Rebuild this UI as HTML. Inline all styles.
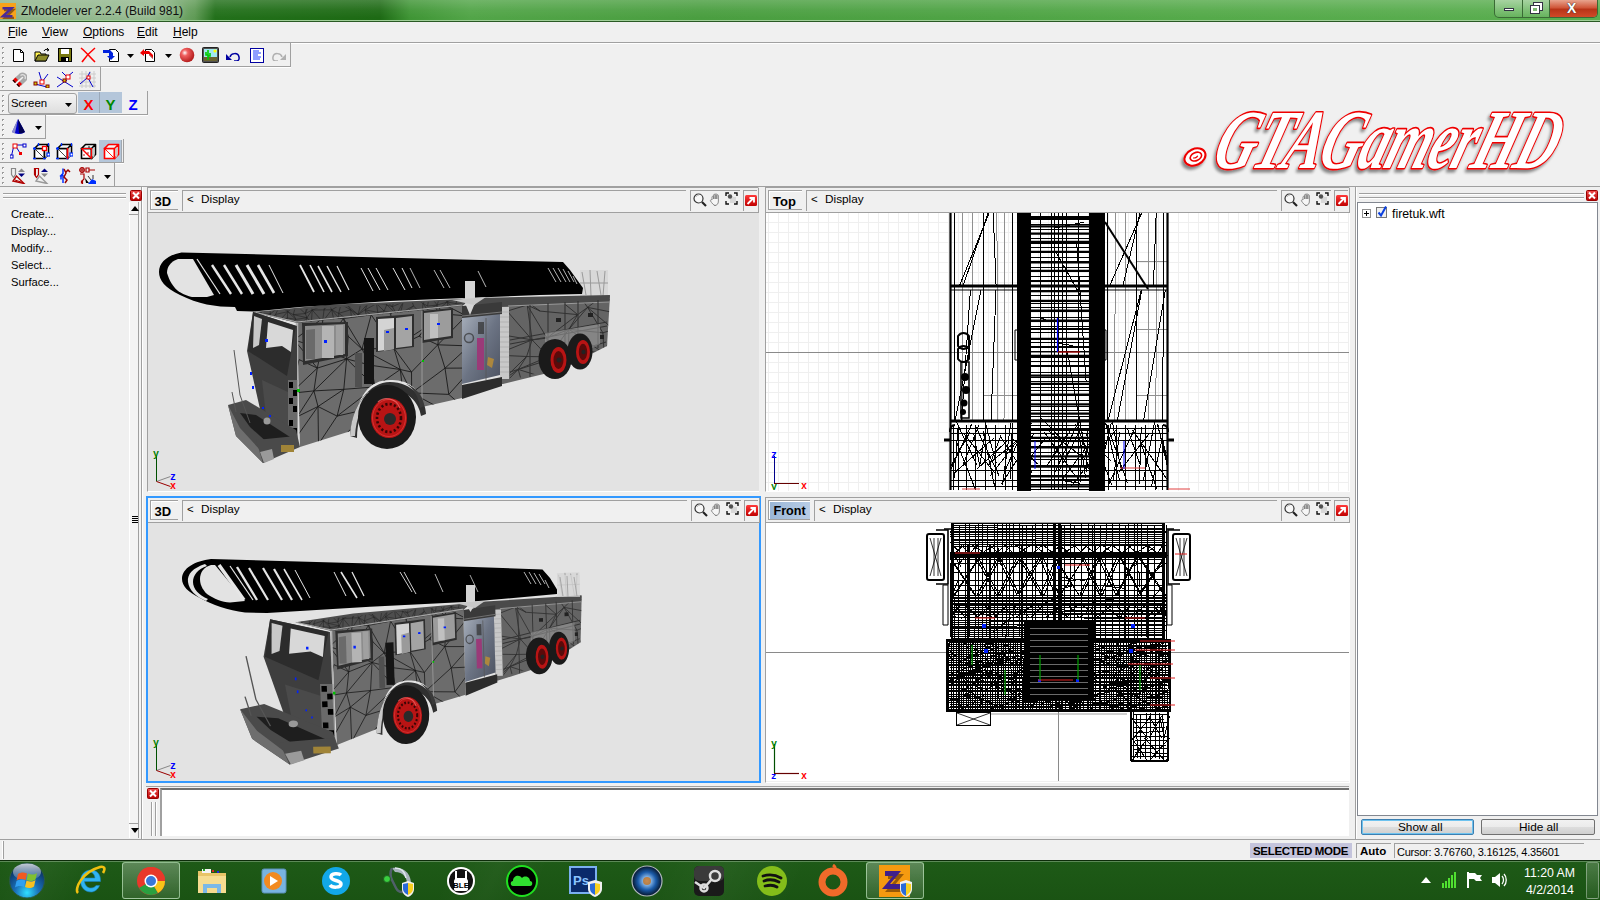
<!DOCTYPE html><html><head><meta charset="utf-8"><style>
*{margin:0;padding:0;box-sizing:border-box}
html,body{width:1600px;height:900px;overflow:hidden;background:#f0f0f0;font-family:"Liberation Sans",sans-serif;color:#000}
body>div,body>svg{position:absolute}
.t{white-space:nowrap;position:absolute}
</style></head><body><div style="left:0;top:0;width:1600px;height:22px;background:linear-gradient(90deg,#8fb58a 0px,#93b98e 150px,#5f9a55 195px,#22701a 215px,#1d6a14 380px,#3f9535 410px,#52a548 470px,#4a9e40 700px,#4fa445 1000px,#55aa4a 1200px,#5aae50 1600px)"></div>
<div style="left:0;top:0;width:1600px;height:22px;background:linear-gradient(180deg,rgba(255,255,255,0.18) 0px,rgba(255,255,255,0.05) 10px,rgba(0,0,0,0.0) 18px)"></div>
<div style="left:0px;top:20px;width:1600px;height:1px;background:#9fcf98"></div>
<div style="left:0px;top:21px;width:1600px;height:1px;background:#2a5a25"></div>
<svg style="left:0;top:3px" width="16" height="16" viewBox="0 0 16 16"><rect width="16" height="16" fill="#f7a21a"/><path d="M4 7H13L5 15H14" fill="none" stroke="#6a3a10" stroke-width="2.6" opacity=".7"/><path d="M2.5 5.2H11.5L3 13.2H12.5" fill="none" stroke="#4a2a98" stroke-width="2.6"/></svg>
<div class="t" style="left:21px;top:4.84px;font-size:12px;line-height:12px;color:#101010;text-shadow:0 0 6px rgba(255,255,255,.5)">ZModeler ver 2.2.4 (Build 981)</div>
<div style="left:1494px;top:0;width:104px;height:18px;border:1px solid #3a6a35;border-top:none;border-radius:0 0 5px 5px;overflow:hidden;background:linear-gradient(180deg,rgba(255,255,255,.35),rgba(255,255,255,.08))">
<div style="position:absolute;left:0;top:0;width:28px;height:17px;border-right:1px solid #3a6a35"></div>
<div style="position:absolute;left:28px;top:0;width:27px;height:17px;border-right:1px solid #3a6a35"></div>
<div style="position:absolute;left:55px;top:0;width:48px;height:17px;background:linear-gradient(180deg,#e8a48e 0%,#d0573a 45%,#b83418 55%,#d04a28 100%)"></div>
<div style="position:absolute;left:9px;top:8px;width:10px;height:3px;background:#fff;border:1px solid #334"></div>
<div style="position:absolute;left:39px;top:3px;width:8px;height:7px;border:2px solid #fff;box-shadow:0 0 0 1px #334"></div><div style="position:absolute;left:36px;top:6px;width:8px;height:7px;border:2px solid #fff;box-shadow:0 0 0 1px #334;background:#7dba74"></div>
<div style="position:absolute;left:72px;top:0px;font:bold 14px/16px 'Liberation Sans';color:#fff;text-shadow:0 0 1px #333,0 0 1px #333">X</div>
</div>
<div class="t" style="left:8px;top:25.84px;font-size:12px;line-height:12px;"><u>F</u>ile</div>
<div class="t" style="left:42px;top:25.84px;font-size:12px;line-height:12px;"><u>V</u>iew</div>
<div class="t" style="left:83px;top:25.84px;font-size:12px;line-height:12px;"><u>O</u>ptions</div>
<div class="t" style="left:137px;top:25.84px;font-size:12px;line-height:12px;"><u>E</u>dit</div>
<div class="t" style="left:173px;top:25.84px;font-size:12px;line-height:12px;"><u>H</u>elp</div>
<div style="left:0px;top:42px;width:1600px;height:1px;background:#a0a0a0"></div>
<div style="left:0px;top:43px;width:1600px;height:1px;background:#ffffff"></div>
<div style="left:0px;top:43px;width:290px;height:23px;background:#f0f0f0"></div>
<div style="left:0px;top:66px;width:291px;height:1px;background:#a0a0a0"></div>
<div style="left:290px;top:43px;width:1px;height:23px;background:#a0a0a0"></div>
<div style="left:0px;top:67px;width:291px;height:1px;background:#fff"></div>
<div style="left:2px;top:47px;width:2px;height:2px;background:#9a9a9a"></div>
<div style="left:3px;top:48px;width:1px;height:1px;background:#fff"></div>
<div style="left:2px;top:52px;width:2px;height:2px;background:#9a9a9a"></div>
<div style="left:3px;top:53px;width:1px;height:1px;background:#fff"></div>
<div style="left:2px;top:57px;width:2px;height:2px;background:#9a9a9a"></div>
<div style="left:3px;top:58px;width:1px;height:1px;background:#fff"></div>
<div style="left:2px;top:62px;width:2px;height:2px;background:#9a9a9a"></div>
<div style="left:3px;top:63px;width:1px;height:1px;background:#fff"></div>
<div style="left:0px;top:67px;width:100px;height:23px;background:#f0f0f0"></div>
<div style="left:0px;top:90px;width:101px;height:1px;background:#a0a0a0"></div>
<div style="left:100px;top:67px;width:1px;height:23px;background:#a0a0a0"></div>
<div style="left:0px;top:91px;width:101px;height:1px;background:#fff"></div>
<div style="left:2px;top:71px;width:2px;height:2px;background:#9a9a9a"></div>
<div style="left:3px;top:72px;width:1px;height:1px;background:#fff"></div>
<div style="left:2px;top:76px;width:2px;height:2px;background:#9a9a9a"></div>
<div style="left:3px;top:77px;width:1px;height:1px;background:#fff"></div>
<div style="left:2px;top:81px;width:2px;height:2px;background:#9a9a9a"></div>
<div style="left:3px;top:82px;width:1px;height:1px;background:#fff"></div>
<div style="left:2px;top:86px;width:2px;height:2px;background:#9a9a9a"></div>
<div style="left:3px;top:87px;width:1px;height:1px;background:#fff"></div>
<div style="left:0px;top:91px;width:147px;height:23px;background:#f0f0f0"></div>
<div style="left:0px;top:114px;width:148px;height:1px;background:#a0a0a0"></div>
<div style="left:147px;top:91px;width:1px;height:23px;background:#a0a0a0"></div>
<div style="left:0px;top:115px;width:148px;height:1px;background:#fff"></div>
<div style="left:2px;top:95px;width:2px;height:2px;background:#9a9a9a"></div>
<div style="left:3px;top:96px;width:1px;height:1px;background:#fff"></div>
<div style="left:2px;top:100px;width:2px;height:2px;background:#9a9a9a"></div>
<div style="left:3px;top:101px;width:1px;height:1px;background:#fff"></div>
<div style="left:2px;top:105px;width:2px;height:2px;background:#9a9a9a"></div>
<div style="left:3px;top:106px;width:1px;height:1px;background:#fff"></div>
<div style="left:2px;top:110px;width:2px;height:2px;background:#9a9a9a"></div>
<div style="left:3px;top:111px;width:1px;height:1px;background:#fff"></div>
<div style="left:0px;top:115px;width:45px;height:23px;background:#f0f0f0"></div>
<div style="left:0px;top:138px;width:46px;height:1px;background:#a0a0a0"></div>
<div style="left:45px;top:115px;width:1px;height:23px;background:#a0a0a0"></div>
<div style="left:0px;top:139px;width:46px;height:1px;background:#fff"></div>
<div style="left:2px;top:119px;width:2px;height:2px;background:#9a9a9a"></div>
<div style="left:3px;top:120px;width:1px;height:1px;background:#fff"></div>
<div style="left:2px;top:124px;width:2px;height:2px;background:#9a9a9a"></div>
<div style="left:3px;top:125px;width:1px;height:1px;background:#fff"></div>
<div style="left:2px;top:129px;width:2px;height:2px;background:#9a9a9a"></div>
<div style="left:3px;top:130px;width:1px;height:1px;background:#fff"></div>
<div style="left:2px;top:134px;width:2px;height:2px;background:#9a9a9a"></div>
<div style="left:3px;top:135px;width:1px;height:1px;background:#fff"></div>
<div style="left:0px;top:139px;width:123px;height:23px;background:#f0f0f0"></div>
<div style="left:0px;top:162px;width:124px;height:1px;background:#a0a0a0"></div>
<div style="left:123px;top:139px;width:1px;height:23px;background:#a0a0a0"></div>
<div style="left:0px;top:163px;width:124px;height:1px;background:#fff"></div>
<div style="left:2px;top:143px;width:2px;height:2px;background:#9a9a9a"></div>
<div style="left:3px;top:144px;width:1px;height:1px;background:#fff"></div>
<div style="left:2px;top:148px;width:2px;height:2px;background:#9a9a9a"></div>
<div style="left:3px;top:149px;width:1px;height:1px;background:#fff"></div>
<div style="left:2px;top:153px;width:2px;height:2px;background:#9a9a9a"></div>
<div style="left:3px;top:154px;width:1px;height:1px;background:#fff"></div>
<div style="left:2px;top:158px;width:2px;height:2px;background:#9a9a9a"></div>
<div style="left:3px;top:159px;width:1px;height:1px;background:#fff"></div>
<div style="left:0px;top:163px;width:114px;height:23px;background:#f0f0f0"></div>
<div style="left:0px;top:186px;width:115px;height:1px;background:#a0a0a0"></div>
<div style="left:114px;top:163px;width:1px;height:23px;background:#a0a0a0"></div>
<div style="left:0px;top:187px;width:115px;height:1px;background:#fff"></div>
<div style="left:2px;top:167px;width:2px;height:2px;background:#9a9a9a"></div>
<div style="left:3px;top:168px;width:1px;height:1px;background:#fff"></div>
<div style="left:2px;top:172px;width:2px;height:2px;background:#9a9a9a"></div>
<div style="left:3px;top:173px;width:1px;height:1px;background:#fff"></div>
<div style="left:2px;top:177px;width:2px;height:2px;background:#9a9a9a"></div>
<div style="left:3px;top:178px;width:1px;height:1px;background:#fff"></div>
<div style="left:2px;top:182px;width:2px;height:2px;background:#9a9a9a"></div>
<div style="left:3px;top:183px;width:1px;height:1px;background:#fff"></div>
<svg style="left:12px;top:48px;" width="14" height="15" viewBox="0 0 14 15"><path d="M1.5 1.5h7l3 3v9h-10z" fill="#fff" stroke="#000"/><path d="M8.5 1.5v3h3" fill="none" stroke="#000"/></svg>
<svg style="left:34px;top:47px;" width="16" height="16" viewBox="0 0 16 16"><path d="M1 5h5l1 2h5v7H1z" fill="#fff250" stroke="#000"/><path d="M1 14l3-6h11l-3 6z" fill="#8c8a28" stroke="#000"/><path d="M10 4c1-2 3-2 4-1" fill="none" stroke="#000"/><path d="M13 1l2 2-2 1" fill="none" stroke="#000"/></svg>
<svg style="left:58px;top:48px;" width="14" height="14" viewBox="0 0 14 14"><rect x=".5" y=".5" width="13" height="13" fill="#7a7a10" stroke="#000"/><rect x="3" y="1" width="8" height="5" fill="#fff"/><rect x="3" y="9" width="8" height="5" fill="#000"/><rect x="8" y="10" width="2" height="3" fill="#fff"/></svg>
<svg style="left:80px;top:47px;" width="17" height="16" viewBox="0 0 17 16"><path d="M1 1c5 4 9 9 14 14M15 1C10 5 6 9 2 15" stroke="#f00" stroke-width="1.6" fill="none"/></svg>
<svg style="left:103px;top:48px;" width="17" height="15" viewBox="0 0 17 15"><path d="M6.5 1.5h6l3 3v9h-9z" fill="#fff" stroke="#000"/><path d="M0 2h7l3 3v3h2l-4 4-4-4h2V5H0z" fill="#0022dd"/></svg>
<svg style="left:127px;top:54px;" width="7" height="4" viewBox="0 0 7 4"><path d="M0 0h7L3.5 4z" fill="#000"/></svg>
<svg style="left:140px;top:48px;" width="18" height="15" viewBox="0 0 18 15"><path d="M5.5 1.5h6l3 3v9h-9z" fill="#fff" stroke="#000"/><path d="M0 5l4-4v2h5l4 4v3L9 6H4v2z" fill="#ee0000"/><path d="M9 6l4 4v1l-4-4z" fill="#800"/></svg>
<svg style="left:165px;top:54px;" width="7" height="4" viewBox="0 0 7 4"><path d="M0 0h7L3.5 4z" fill="#000"/></svg>
<svg style="left:179px;top:47px;" width="16" height="16" viewBox="0 0 16 16"><defs><radialGradient id="rs" cx=".35" cy=".35" r=".7"><stop offset="0" stop-color="#fff"/><stop offset=".3" stop-color="#f06060"/><stop offset="1" stop-color="#b01818"/></radialGradient></defs><circle cx="8" cy="8" r="7.3" fill="url(#rs)"/></svg>
<svg style="left:202px;top:47px;" width="17" height="16" viewBox="0 0 17 16"><rect x=".5" y=".5" width="16" height="15" rx="1" fill="#505050" stroke="#222"/><rect x="2" y="2" width="13" height="12" fill="#a0e8f0"/><rect x="2" y="10" width="13" height="4" fill="#6a6430"/><path d="M6 3v10M4 5v3h2M8 6v3H6" stroke="#00cc00" stroke-width="1.6" fill="none"/><circle cx="13" cy="4" r="1.6" fill="#ff0"/></svg>
<svg style="left:226px;top:51px;" width="14" height="10" viewBox="0 0 14 10"><path d="M4 6c1-4 8-5 9 0s-4 4-5 4" fill="none" stroke="#0000a0" stroke-width="1.5"/><path d="M0 3v6h6z" fill="#0000a0"/></svg>
<svg style="left:250px;top:48px;" width="14" height="15" viewBox="0 0 14 15"><rect x=".5" y=".5" width="13" height="14" fill="#fff" stroke="#0000a0"/><path d="M3 3h6M3 5h8M3 7h5M3 9h8M3 11h7" stroke="#2040ff" stroke-width="1.2"/></svg>
<svg style="left:272px;top:51px;" width="14" height="10" viewBox="0 0 14 10"><path d="M10 6C9 2 2 1 1 6s4 4 5 4" fill="none" stroke="#b0b0b0" stroke-width="1.5"/><path d="M14 3v6H8z" fill="#b0b0b0"/></svg>
<svg style="left:11px;top:72px;" width="16" height="15" viewBox="0 0 16 15"><path d="M4 8.5L9.5 3.5C12 1.5 15.5 3.5 14 7L8.5 12.5" stroke="#a8a8a8" stroke-width="4.2" fill="none"/><path d="M9.5 3.5C12 1.5 15.5 3.5 14 7" stroke="#e0e0e0" stroke-width="1.2" fill="none"/><path d="M1.5 8.5l3-3 2.5 2.5-3 3z" fill="#e00"/><path d="M1.5 8.5l2.5 2.5 .8-.8-2.5-2.5z" fill="#000"/><path d="M5.5 12.5l3-3 2.5 2.5-3 3z" fill="#e00"/><path d="M5.5 12.5l2.5 2.5 .8-.8-2.5-2.5z" fill="#000"/></svg>
<svg style="left:33px;top:71px;" width="18" height="17" viewBox="0 0 18 17"><path d="M6 1l3 10 6-8M2 13l12 3" stroke="#0000cc" fill="none"/><rect x="7" y="9" width="4" height="4" fill="#fff" stroke="#e00"/><rect x="1" y="11" width="3" height="3" fill="#cc0" stroke="#800"/><rect x="13" y="14" width="3" height="3" fill="#cc0" stroke="#800"/></svg>
<svg style="left:56px;top:71px;" width="18" height="17" viewBox="0 0 18 17"><path d="M6 1l5 5 6-5M1 6l16 10M1 16l10-7" stroke="#0000cc" fill="none"/><rect x="10" y="4" width="4" height="4" fill="#fff" stroke="#e00"/><rect x="7" y="8" width="3" height="3" fill="#cc0" stroke="#800"/></svg>
<svg style="left:79px;top:71px;" width="18" height="17" viewBox="0 0 18 17"><path d="M0 3h17M0 7h17M0 11h17M0 15h17M3 0v17M7 0v17M11 0v17M15 0v17" stroke="#ccc" fill="none"/><path d="M11 1l-3 6-7 6M9 7l5 9" stroke="#0000cc" fill="none"/><rect x="8" y="5" width="3" height="3" fill="#fff" stroke="#e00"/></svg>
<div style="left:8px;top:93px;width:69px;height:21px;border:1px solid #a0a0a0;border-radius:3px;background:linear-gradient(180deg,#f4f4f4,#dedede)"></div>
<div class="t" style="left:11px;top:98.35px;font-size:11.4px;line-height:11.4px;">Screen</div>
<svg style="left:65px;top:103px;" width="7" height="4" viewBox="0 0 7 4"><path d="M0 0h7L3.5 4z" fill="#000"/></svg>
<div style="left:78px;top:92px;width:22px;height:21px;background:#b4c6da;border-right:1px solid #9aa8b8"></div>
<div style="left:100px;top:92px;width:22px;height:21px;background:#b4c6da"></div>
<div class="t" style="left:83.5px;top:96.80px;font-size:15px;line-height:15px;font-weight:bold;color:#f00">X</div>
<div class="t" style="left:105.5px;top:96.80px;font-size:15px;line-height:15px;font-weight:bold;color:#080">Y</div>
<div class="t" style="left:128.5px;top:96.80px;font-size:15px;line-height:15px;font-weight:bold;color:#00f">Z</div>
<svg style="left:12px;top:119px;" width="14" height="16" viewBox="0 0 14 16"><path d="M6 0L0 13c2 2 10 3 13 0z" fill="#0000cc"/><path d="M6 0l7 13c-2 1-4 2-6 1z" fill="#000050"/><path d="M6 0L3 14c-1 0-2 0-3-1z" fill="#c8c8c8" opacity=".7"/></svg>
<svg style="left:35px;top:126px;" width="7" height="4" viewBox="0 0 7 4"><path d="M0 0h7L3.5 4z" fill="#000"/></svg>
<div style="left:99px;top:140px;width:23px;height:22px;background:#b4c6da;border-right:1px solid #a0a8b0"></div>
<svg style="left:10px;top:143px;" width="18" height="16" viewBox="0 0 18 16"><path d="M4 2l-3 13M5 2h9M5 2l5 8" stroke="#0000cc" fill="none"/><rect x="3" y="1" width="4" height="4" fill="#fff" stroke="#e00"/><rect x="9" y="9" width="3" height="3" fill="#e00"/><rect x="13" y="1" width="3" height="3" fill="#fff" stroke="#00c"/><rect x="0" y="12" width="3" height="3" fill="#fff" stroke="#00c"/></svg>
<svg style="left:33px;top:143px;" width="17" height="17" viewBox="0 0 17 17"><path d="M1.5 5.5h10v10h-10z" fill="#fff" stroke="#000" stroke-width="1.6"/><path d="M1.5 5.5l4-4h10l-4 4zM11.5 15.5l4-4v-10l-4 4z" fill="#f4f4f4" stroke="#000" stroke-width="1.6" stroke-linejoin="round"/><path d="M12.5 6v9l2-2V4z" fill="#c8c8c8"/><path d="M2 6l9 9" stroke="#333" stroke-width=".9"/><g fill="none" stroke="#0030ff" stroke-width="1.3"><path d="M0 5.5h3M1.5 4v3M10 15.5h3M0 15.5h3M14 11.5h3M5.5 0v3M15.5 0v3"/></g><rect x="9.5" y="3.5" width="4" height="4" fill="#fff" stroke="#f00" stroke-width="1.3"/><rect x="14" y="10" width="3" height="3" fill="#fff" stroke="#0030ff" stroke-width="1.2"/></svg>
<svg style="left:56px;top:143px;" width="17" height="17" viewBox="0 0 17 17"><path d="M1.5 5.5h10v10h-10z" fill="#fff" stroke="#000" stroke-width="1.6"/><path d="M1.5 5.5l4-4h10l-4 4zM11.5 15.5l4-4v-10l-4 4z" fill="#f4f4f4" stroke="#000" stroke-width="1.6" stroke-linejoin="round"/><path d="M12.5 6v9l2-2V4z" fill="#c8c8c8"/><path d="M2 6l9 9" stroke="#333" stroke-width=".9"/><g fill="none" stroke="#0030ff" stroke-width="1.3"><path d="M0 5.5h3M1.5 4v3M10 15.5h3M0 15.5h3M14 11.5h3M5.5 0v3M15.5 0v3"/></g><path d="M11.5 5v11" stroke="#f00" stroke-width="1.6"/><rect x="14" y="10" width="3" height="3" fill="#fff" stroke="#0030ff" stroke-width="1.2"/></svg>
<svg style="left:80px;top:143px;" width="17" height="17" viewBox="0 0 17 17"><path d="M1.5 5.5h10v10h-10z" fill="#fff" stroke="#000" stroke-width="1.6"/><path d="M1.5 5.5l4-4h10l-4 4zM11.5 15.5l4-4v-10l-4 4z" fill="#f4f4f4" stroke="#000" stroke-width="1.6" stroke-linejoin="round"/><path d="M12.5 6v9l2-2V4z" fill="#c8c8c8"/><path d="M2 6l9 9" stroke="#333" stroke-width=".9"/><path d="M1.5 5.5l10 10" stroke="#f00" stroke-width="1.4"/><path d="M1.5 5.5h10v10" stroke="#f00" stroke-width="1.2" fill="none"/><circle cx="4" cy="12" r=".8" fill="#a00"/><circle cx="8" cy="10" r=".8" fill="#a00"/><circle cx="9" cy="4" r=".8" fill="#000"/></svg>
<svg style="left:103px;top:143px;" width="17" height="17" viewBox="0 0 17 17"><path d="M1.5 5.5h10v10h-10z" fill="#fff" stroke="#f00" stroke-width="1.6"/><path d="M1.5 5.5l4-4h10l-4 4zM11.5 15.5l4-4v-10l-4 4z" fill="#f4f4f4" stroke="#f00" stroke-width="1.6" stroke-linejoin="round"/><path d="M12.5 6v9l2-2V4z" fill="#c8c8c8"/><path d="M2 6l9 9" stroke="#f00" stroke-width=".9"/></svg>
<svg style="left:10px;top:167px;" width="16" height="17" viewBox="0 0 16 17"><path d="M1.5 1.5h4v6l-2 3-2-3z" fill="none" stroke="#888" stroke-width="1.2"/><path d="M3 14l11 2.5L6.5 9z" fill="none" stroke="#b00000" stroke-width="1.4"/><path d="M5 13l6 2" stroke="#b00000"/><path d="M8 5l3.5-3.5L15 5z" fill="#888"/><path d="M8 6.5h7l-3.5 3.5z" fill="#000080"/></svg>
<svg style="left:33px;top:167px;" width="16" height="17" viewBox="0 0 16 17"><path d="M1.5 1.5h4v6l-2 3-2-3z" fill="none" stroke="#b00000" stroke-width="1.2"/><path d="M2.5 1.5v8" stroke="#b00000"/><path d="M3 14l11 2.5L6.5 9z" fill="none" stroke="#999" stroke-width="1.4"/><path d="M8 5l3.5-3.5L15 5z" fill="#000080"/><path d="M8 6.5h7l-3.5 3.5z" fill="#888"/></svg>
<svg style="left:59px;top:167px;" width="12" height="17" viewBox="0 0 12 17"><path d="M4 1.5v5l-2 3v3M4 6.5l-3 3M4 8v8" stroke="#0030ff" stroke-width="1.5" fill="none"/><path d="M5 2l2 4-2 4 3 3-2 3M7 5l2-2 2 2" stroke="#900" stroke-width="1.5" fill="none"/></svg>
<svg style="left:79px;top:167px;" width="18" height="17" viewBox="0 0 18 17"><circle cx="3" cy="3" r="2.3" fill="none" stroke="#a00" stroke-width="1.2"/><path d="M3 .7v4.6M.7 3h4.6" stroke="#a00"/><path d="M7 1h3v4H7zM10 3h6" stroke="#a00" stroke-width="1.2" fill="none"/><path d="M1 7h4v5l-1.5 1.5v3.5M2.5 13.5v3" stroke="#a00" stroke-width="1.2" fill="none"/><path d="M9 17l4-5 4 2v3z" fill="#0030ff"/><path d="M6 11l4 5h-3z" fill="#000"/><path d="M9 9l3 4M14 8v4" stroke="#000" stroke-width=".8"/></svg>
<svg style="left:104px;top:175px;" width="7" height="4" viewBox="0 0 7 4"><path d="M0 0h7L3.5 4z" fill="#000"/></svg>
<div style="left:0px;top:186px;width:1600px;height:1px;background:#a0a0a0"></div>
<div style="left:0px;top:187px;width:141px;height:652px;background:#f0f0f0"></div>
<div style="left:141px;top:187px;width:1px;height:652px;background:#a0a0a0"></div>
<div style="left:142px;top:187px;width:1px;height:652px;background:#fff"></div>
<div style="left:3px;top:193px;width:123px;height:1px;background:#a0a0a0"></div>
<div style="left:3px;top:194px;width:123px;height:1px;background:#fff"></div>
<div style="left:3px;top:197px;width:123px;height:1px;background:#a0a0a0"></div>
<div style="left:3px;top:198px;width:123px;height:1px;background:#fff"></div>
<svg style="left:130px;top:190px;" width="12" height="11" viewBox="0 0 12 11"><defs><linearGradient id="rg130190" x1="0" y1="0" x2="0" y2="1"><stop offset="0" stop-color="#f05050"/><stop offset="1" stop-color="#b80000"/></linearGradient></defs><rect x=".5" y=".5" width="11" height="10" rx="1" fill="url(#rg130190)" stroke="#900"/><path d="M3 2.5l6 6M9 2.5l-6 6" stroke="#fff" stroke-width="2"/></svg>
<div style="left:129px;top:202px;width:12px;height:636px;background:#f4f4f4;border-left:1px solid #fff"></div>
<div style="left:138px;top:202px;width:1px;height:636px;background:#a0a0a0"></div>
<div style="left:129px;top:214px;width:10px;height:1px;background:#a0a0a0"></div>
<svg style="left:131px;top:206px;" width="8" height="5" viewBox="0 0 8 5"><path d="M0 5h8L4 0z" fill="#000"/></svg>
<div style="left:129px;top:823px;width:10px;height:1px;background:#a0a0a0"></div>
<svg style="left:131px;top:828px;" width="8" height="5" viewBox="0 0 8 5"><path d="M0 0h8L4 5z" fill="#000"/></svg>
<div style="left:132px;top:516px;width:6px;height:1px;background:#000"></div>
<div style="left:132px;top:518px;width:6px;height:1px;background:#000"></div>
<div style="left:132px;top:520px;width:6px;height:1px;background:#000"></div>
<div style="left:132px;top:522px;width:6px;height:1px;background:#000"></div>
<div class="t" style="left:11px;top:208.52px;font-size:11.2px;line-height:11.2px;">Create...</div>
<div class="t" style="left:11px;top:225.52px;font-size:11.2px;line-height:11.2px;">Display...</div>
<div class="t" style="left:11px;top:242.52px;font-size:11.2px;line-height:11.2px;">Modify...</div>
<div class="t" style="left:11px;top:259.52px;font-size:11.2px;line-height:11.2px;">Select...</div>
<div class="t" style="left:11px;top:276.52px;font-size:11.2px;line-height:11.2px;">Surface...</div>
<div style="left:147px;top:187px;width:612px;height:305px;background:#f0f0f0;border-left:1px solid #a0a0a0;border-top:1px solid #a0a0a0;border-right:1px solid #fff;border-bottom:1px solid #fff"></div>
<div style="left:148px;top:188px;width:610px;height:24px;background:#f0f0f0"></div>
<div style="left:150px;top:190px;width:28px;height:20px;background:#f0f0f0;border-top:1px solid #a0a0a0;border-left:1px solid #a0a0a0;border-bottom:1px solid #a0a0a0;box-shadow:inset 1px 1px 0 #fff"></div>
<div class="t" style="left:154.5px;top:195.00px;font-size:13px;line-height:13px;font-weight:bold">3D</div>
<div style="left:182px;top:190px;width:504px;height:21px;border-left:1px solid #a0a0a0;border-top:1px solid #a0a0a0"></div>
<div class="t" style="left:187px;top:194.27px;font-size:11.5px;line-height:11.5px;">&lt;</div>
<div class="t" style="left:201px;top:194.31px;font-size:11.8px;line-height:11.8px;">Display</div>
<div style="left:690px;top:190px;width:50px;height:21px;border-left:1px solid #a0a0a0;border-top:1px solid #a0a0a0"></div>
<svg style="left:693px;top:193px;" width="14" height="14" viewBox="0 0 14 14"><circle cx="5.5" cy="5.5" r="4.5" fill="#f8f8f8" stroke="#333" stroke-width="1.2"/><path d="M3 4a3 3 0 0 1 3-2" stroke="#bbb" fill="none"/><path d="M9 9l4 4" stroke="#222" stroke-width="2.2"/></svg>
<svg style="left:709px;top:192px;" width="14" height="14" viewBox="0 0 14 14"><path d="M3 8V5c0-1 1.6-1 1.6 0v2V3c0-1 1.6-1 1.6 0v4V2.5c0-1 1.6-1 1.6 0V7V3.5c0-1 1.6-1 1.6 0V9c0 3-1.5 4.5-4 4.5H6.5C4.5 13.5 3 11 1.5 9c-.5-1 .8-1.8 1.5-1z" fill="#f6f6f6" stroke="#808080" stroke-width=".9"/></svg>
<svg style="left:725px;top:192px;" width="13" height="13" viewBox="0 0 13 13"><path d="M1 4V1h3M9 1h3v3M12 9v3H9M4 12H1V9" stroke="#111" fill="none" stroke-width="1.4"/><rect x="5" y="5" width="6" height="6" fill="#d8d8d8"/><circle cx="5" cy="4.5" r="2.2" fill="#505050"/></svg>
<div style="left:743px;top:190px;width:14px;height:21px;border-left:1px solid #a0a0a0;border-top:1px solid #a0a0a0"></div>
<svg style="left:745px;top:195px;" width="12" height="12" viewBox="0 0 12 12"><defs><linearGradient id="mg148188" x1="0" y1="0" x2="0" y2="1"><stop offset="0" stop-color="#ff3a3a"/><stop offset="1" stop-color="#c00000"/></linearGradient></defs><rect width="12" height="11" rx="1.5" fill="url(#mg148188)"/><path d="M2.5 9l6-6M4.5 3h4.5v4.5" stroke="#fff" stroke-width="1.8" fill="none"/></svg>
<div style="left:148px;top:212px;width:610px;height:1px;background:#a0a0a0"></div>
<div style="left:758px;top:188px;width:1px;height:25px;background:#a0a0a0"></div>
<div style="left:148px;top:213px;width:611px;height:278px;background:#e3e3e3"></div>
<div style="left:147px;top:213px;width:1px;height:278px;background:#a0a0a0"></div>
<div style="left:765px;top:187px;width:585px;height:305px;background:#f0f0f0;border-left:1px solid #a0a0a0;border-top:1px solid #a0a0a0;border-right:1px solid #fff;border-bottom:1px solid #fff"></div>
<div style="left:766px;top:188px;width:583px;height:24px;background:#f0f0f0"></div>
<div style="left:768px;top:190px;width:34px;height:20px;background:#f0f0f0;border-top:1px solid #a0a0a0;border-left:1px solid #a0a0a0;border-bottom:1px solid #a0a0a0;box-shadow:inset 1px 1px 0 #fff"></div>
<div class="t" style="left:773.0px;top:195.00px;font-size:13px;line-height:13px;font-weight:bold">Top</div>
<div style="left:806px;top:190px;width:471px;height:21px;border-left:1px solid #a0a0a0;border-top:1px solid #a0a0a0"></div>
<div class="t" style="left:811px;top:194.27px;font-size:11.5px;line-height:11.5px;">&lt;</div>
<div class="t" style="left:825px;top:194.31px;font-size:11.8px;line-height:11.8px;">Display</div>
<div style="left:1281px;top:190px;width:50px;height:21px;border-left:1px solid #a0a0a0;border-top:1px solid #a0a0a0"></div>
<svg style="left:1284px;top:193px;" width="14" height="14" viewBox="0 0 14 14"><circle cx="5.5" cy="5.5" r="4.5" fill="#f8f8f8" stroke="#333" stroke-width="1.2"/><path d="M3 4a3 3 0 0 1 3-2" stroke="#bbb" fill="none"/><path d="M9 9l4 4" stroke="#222" stroke-width="2.2"/></svg>
<svg style="left:1300px;top:192px;" width="14" height="14" viewBox="0 0 14 14"><path d="M3 8V5c0-1 1.6-1 1.6 0v2V3c0-1 1.6-1 1.6 0v4V2.5c0-1 1.6-1 1.6 0V7V3.5c0-1 1.6-1 1.6 0V9c0 3-1.5 4.5-4 4.5H6.5C4.5 13.5 3 11 1.5 9c-.5-1 .8-1.8 1.5-1z" fill="#f6f6f6" stroke="#808080" stroke-width=".9"/></svg>
<svg style="left:1316px;top:192px;" width="13" height="13" viewBox="0 0 13 13"><path d="M1 4V1h3M9 1h3v3M12 9v3H9M4 12H1V9" stroke="#111" fill="none" stroke-width="1.4"/><rect x="5" y="5" width="6" height="6" fill="#d8d8d8"/><circle cx="5" cy="4.5" r="2.2" fill="#505050"/></svg>
<div style="left:1334px;top:190px;width:14px;height:21px;border-left:1px solid #a0a0a0;border-top:1px solid #a0a0a0"></div>
<svg style="left:1336px;top:195px;" width="12" height="12" viewBox="0 0 12 12"><defs><linearGradient id="mg766188" x1="0" y1="0" x2="0" y2="1"><stop offset="0" stop-color="#ff3a3a"/><stop offset="1" stop-color="#c00000"/></linearGradient></defs><rect width="12" height="11" rx="1.5" fill="url(#mg766188)"/><path d="M2.5 9l6-6M4.5 3h4.5v4.5" stroke="#fff" stroke-width="1.8" fill="none"/></svg>
<div style="left:766px;top:212px;width:583px;height:1px;background:#a0a0a0"></div>
<div style="left:1349px;top:188px;width:1px;height:25px;background:#a0a0a0"></div>
<svg style="left:766px;top:213px;" width="583" height="278" viewBox="0 0 583 278"><rect width="583" height="278" fill="#fff"/><g stroke="#efefef" stroke-width="1"><path d="M2.5 0V278" /><path d="M12.5 0V278" /><path d="M22.5 0V278" /><path d="M32.5 0V278" /><path d="M42.5 0V278" /><path d="M52.5 0V278" /><path d="M62.5 0V278" /><path d="M72.5 0V278" /><path d="M82.5 0V278" /><path d="M92.5 0V278" /><path d="M102.5 0V278" /><path d="M112.5 0V278" /><path d="M122.5 0V278" /><path d="M132.5 0V278" /><path d="M142.5 0V278" /><path d="M152.5 0V278" /><path d="M162.5 0V278" /><path d="M172.5 0V278" /><path d="M182.5 0V278" /><path d="M192.5 0V278" /><path d="M202.5 0V278" /><path d="M212.5 0V278" /><path d="M222.5 0V278" /><path d="M232.5 0V278" /><path d="M242.5 0V278" /><path d="M252.5 0V278" /><path d="M262.5 0V278" /><path d="M272.5 0V278" /><path d="M282.5 0V278" /><path d="M292.5 0V278" /><path d="M302.5 0V278" /><path d="M312.5 0V278" /><path d="M322.5 0V278" /><path d="M332.5 0V278" /><path d="M342.5 0V278" /><path d="M352.5 0V278" /><path d="M362.5 0V278" /><path d="M372.5 0V278" /><path d="M382.5 0V278" /><path d="M392.5 0V278" /><path d="M402.5 0V278" /><path d="M412.5 0V278" /><path d="M422.5 0V278" /><path d="M432.5 0V278" /><path d="M442.5 0V278" /><path d="M452.5 0V278" /><path d="M462.5 0V278" /><path d="M472.5 0V278" /><path d="M482.5 0V278" /><path d="M492.5 0V278" /><path d="M502.5 0V278" /><path d="M512.5 0V278" /><path d="M522.5 0V278" /><path d="M532.5 0V278" /><path d="M542.5 0V278" /><path d="M552.5 0V278" /><path d="M562.5 0V278" /><path d="M572.5 0V278" /><path d="M582.5 0V278" /><path d="M0 9.5H583" /><path d="M0 19.5H583" /><path d="M0 29.5H583" /><path d="M0 39.5H583" /><path d="M0 49.5H583" /><path d="M0 59.5H583" /><path d="M0 69.5H583" /><path d="M0 79.5H583" /><path d="M0 89.5H583" /><path d="M0 99.5H583" /><path d="M0 109.5H583" /><path d="M0 119.5H583" /><path d="M0 129.5H583" /><path d="M0 139.5H583" /><path d="M0 149.5H583" /><path d="M0 159.5H583" /><path d="M0 169.5H583" /><path d="M0 179.5H583" /><path d="M0 189.5H583" /><path d="M0 199.5H583" /><path d="M0 209.5H583" /><path d="M0 219.5H583" /><path d="M0 229.5H583" /><path d="M0 239.5H583" /><path d="M0 249.5H583" /><path d="M0 259.5H583" /><path d="M0 269.5H583" /></g><path d="M0 139.5H583" stroke="#8a8a8a"/></svg>
<div style="left:146px;top:496px;width:615px;height:287px;border:2px solid #3399ff;background:#f0f0f0"></div>
<div style="left:148px;top:498px;width:611px;height:24px;background:#f0f0f0"></div>
<div style="left:150px;top:500px;width:28px;height:20px;background:#f0f0f0;border-top:1px solid #a0a0a0;border-left:1px solid #a0a0a0;border-bottom:1px solid #a0a0a0;box-shadow:inset 1px 1px 0 #fff"></div>
<div class="t" style="left:154.5px;top:505.00px;font-size:13px;line-height:13px;font-weight:bold">3D</div>
<div style="left:182px;top:500px;width:505px;height:21px;border-left:1px solid #a0a0a0;border-top:1px solid #a0a0a0"></div>
<div class="t" style="left:187px;top:504.27px;font-size:11.5px;line-height:11.5px;">&lt;</div>
<div class="t" style="left:201px;top:504.31px;font-size:11.8px;line-height:11.8px;">Display</div>
<div style="left:691px;top:500px;width:50px;height:21px;border-left:1px solid #a0a0a0;border-top:1px solid #a0a0a0"></div>
<svg style="left:694px;top:503px;" width="14" height="14" viewBox="0 0 14 14"><circle cx="5.5" cy="5.5" r="4.5" fill="#f8f8f8" stroke="#333" stroke-width="1.2"/><path d="M3 4a3 3 0 0 1 3-2" stroke="#bbb" fill="none"/><path d="M9 9l4 4" stroke="#222" stroke-width="2.2"/></svg>
<svg style="left:710px;top:502px;" width="14" height="14" viewBox="0 0 14 14"><path d="M3 8V5c0-1 1.6-1 1.6 0v2V3c0-1 1.6-1 1.6 0v4V2.5c0-1 1.6-1 1.6 0V7V3.5c0-1 1.6-1 1.6 0V9c0 3-1.5 4.5-4 4.5H6.5C4.5 13.5 3 11 1.5 9c-.5-1 .8-1.8 1.5-1z" fill="#f6f6f6" stroke="#808080" stroke-width=".9"/></svg>
<svg style="left:726px;top:502px;" width="13" height="13" viewBox="0 0 13 13"><path d="M1 4V1h3M9 1h3v3M12 9v3H9M4 12H1V9" stroke="#111" fill="none" stroke-width="1.4"/><rect x="5" y="5" width="6" height="6" fill="#d8d8d8"/><circle cx="5" cy="4.5" r="2.2" fill="#505050"/></svg>
<div style="left:744px;top:500px;width:14px;height:21px;border-left:1px solid #a0a0a0;border-top:1px solid #a0a0a0"></div>
<svg style="left:746px;top:505px;" width="12" height="12" viewBox="0 0 12 12"><defs><linearGradient id="mg148498" x1="0" y1="0" x2="0" y2="1"><stop offset="0" stop-color="#ff3a3a"/><stop offset="1" stop-color="#c00000"/></linearGradient></defs><rect width="12" height="11" rx="1.5" fill="url(#mg148498)"/><path d="M2.5 9l6-6M4.5 3h4.5v4.5" stroke="#fff" stroke-width="1.8" fill="none"/></svg>
<div style="left:148px;top:522px;width:611px;height:1px;background:#a0a0a0"></div>
<div style="left:759px;top:498px;width:1px;height:25px;background:#a0a0a0"></div>
<div style="left:148px;top:523px;width:611px;height:258px;background:#e3e3e3"></div>
<div style="left:765px;top:497px;width:585px;height:286px;background:#f0f0f0;border-left:1px solid #a0a0a0;border-top:1px solid #a0a0a0;border-right:1px solid #fff;border-bottom:1px solid #fff"></div>
<div style="left:766px;top:498px;width:583px;height:24px;background:#f0f0f0"></div>
<div style="left:768px;top:500px;width:42px;height:20px;background:linear-gradient(90deg,#9ab6d6,#b8cde6);border-top:1px solid #a0a0a0;border-left:1px solid #a0a0a0;border-bottom:1px solid #a0a0a0;box-shadow:inset 1px 1px 0 #fff"></div>
<div class="t" style="left:773.5px;top:505.33px;font-size:12.6px;line-height:12.6px;font-weight:bold">Front</div>
<div style="left:814px;top:500px;width:463px;height:21px;border-left:1px solid #a0a0a0;border-top:1px solid #a0a0a0"></div>
<div class="t" style="left:819px;top:504.27px;font-size:11.5px;line-height:11.5px;">&lt;</div>
<div class="t" style="left:833px;top:504.31px;font-size:11.8px;line-height:11.8px;">Display</div>
<div style="left:1281px;top:500px;width:50px;height:21px;border-left:1px solid #a0a0a0;border-top:1px solid #a0a0a0"></div>
<svg style="left:1284px;top:503px;" width="14" height="14" viewBox="0 0 14 14"><circle cx="5.5" cy="5.5" r="4.5" fill="#f8f8f8" stroke="#333" stroke-width="1.2"/><path d="M3 4a3 3 0 0 1 3-2" stroke="#bbb" fill="none"/><path d="M9 9l4 4" stroke="#222" stroke-width="2.2"/></svg>
<svg style="left:1300px;top:502px;" width="14" height="14" viewBox="0 0 14 14"><path d="M3 8V5c0-1 1.6-1 1.6 0v2V3c0-1 1.6-1 1.6 0v4V2.5c0-1 1.6-1 1.6 0V7V3.5c0-1 1.6-1 1.6 0V9c0 3-1.5 4.5-4 4.5H6.5C4.5 13.5 3 11 1.5 9c-.5-1 .8-1.8 1.5-1z" fill="#f6f6f6" stroke="#808080" stroke-width=".9"/></svg>
<svg style="left:1316px;top:502px;" width="13" height="13" viewBox="0 0 13 13"><path d="M1 4V1h3M9 1h3v3M12 9v3H9M4 12H1V9" stroke="#111" fill="none" stroke-width="1.4"/><rect x="5" y="5" width="6" height="6" fill="#d8d8d8"/><circle cx="5" cy="4.5" r="2.2" fill="#505050"/></svg>
<div style="left:1334px;top:500px;width:14px;height:21px;border-left:1px solid #a0a0a0;border-top:1px solid #a0a0a0"></div>
<svg style="left:1336px;top:505px;" width="12" height="12" viewBox="0 0 12 12"><defs><linearGradient id="mg766498" x1="0" y1="0" x2="0" y2="1"><stop offset="0" stop-color="#ff3a3a"/><stop offset="1" stop-color="#c00000"/></linearGradient></defs><rect width="12" height="11" rx="1.5" fill="url(#mg766498)"/><path d="M2.5 9l6-6M4.5 3h4.5v4.5" stroke="#fff" stroke-width="1.8" fill="none"/></svg>
<div style="left:766px;top:522px;width:583px;height:1px;background:#a0a0a0"></div>
<div style="left:1349px;top:498px;width:1px;height:25px;background:#a0a0a0"></div>
<svg style="left:766px;top:523px;" width="583" height="258" viewBox="0 0 583 258"><rect width="583" height="258" fill="#fff"/><path d="M0 129.5H583M292.5 0V258" stroke="#8a8a8a"/></svg>
<div style="left:146px;top:786px;width:1203px;height:53px;background:#f0f0f0"></div>
<div style="left:146px;top:786px;width:1203px;height:1px;background:#a0a0a0"></div>
<svg style="left:147px;top:788px;" width="12" height="11" viewBox="0 0 12 11"><defs><linearGradient id="rg147788" x1="0" y1="0" x2="0" y2="1"><stop offset="0" stop-color="#f05050"/><stop offset="1" stop-color="#b80000"/></linearGradient></defs><rect x=".5" y=".5" width="11" height="10" rx="1" fill="url(#rg147788)" stroke="#900"/><path d="M3 2.5l6 6M9 2.5l-6 6" stroke="#fff" stroke-width="2"/></svg>
<div style="left:151px;top:802px;width:1px;height:34px;background:#a0a0a0"></div>
<div style="left:152px;top:802px;width:1px;height:34px;background:#fff"></div>
<div style="left:155px;top:802px;width:1px;height:34px;background:#a0a0a0"></div>
<div style="left:156px;top:802px;width:1px;height:34px;background:#fff"></div>
<div style="left:160px;top:788px;width:1189px;height:48px;background:#fff;border-top:2px solid #707070;border-left:2px solid #a0a0a0"></div>
<div style="left:1354px;top:187px;width:246px;height:652px;background:#f0f0f0"></div>
<div style="left:1355px;top:187px;width:1px;height:652px;background:#a0a0a0"></div>
<div style="left:1356px;top:187px;width:1px;height:652px;background:#fff"></div>
<div style="left:1359px;top:193px;width:225px;height:1px;background:#a0a0a0"></div>
<div style="left:1359px;top:194px;width:225px;height:1px;background:#fff"></div>
<div style="left:1359px;top:197px;width:225px;height:1px;background:#a0a0a0"></div>
<div style="left:1359px;top:198px;width:225px;height:1px;background:#fff"></div>
<svg style="left:1586px;top:190px;" width="12" height="11" viewBox="0 0 12 11"><defs><linearGradient id="rg1586190" x1="0" y1="0" x2="0" y2="1"><stop offset="0" stop-color="#f05050"/><stop offset="1" stop-color="#b80000"/></linearGradient></defs><rect x=".5" y=".5" width="11" height="10" rx="1" fill="url(#rg1586190)" stroke="#900"/><path d="M3 2.5l6 6M9 2.5l-6 6" stroke="#fff" stroke-width="2"/></svg>
<div style="left:1357px;top:202px;width:241px;height:614px;background:#fff;border:1px solid #828790"></div>
<svg style="left:1362px;top:209px;" width="9" height="9" viewBox="0 0 9 9"><rect x=".5" y=".5" width="8" height="8" fill="#fff" stroke="#919191"/><path d="M2 4.5h5M4.5 2v5" stroke="#000"/></svg>
<svg style="left:1376px;top:206px;" width="12" height="12" viewBox="0 0 12 12"><rect x=".5" y="1.5" width="10" height="10" fill="#f0f0f0" stroke="#777"/><path d="M2.5 6.5l2.5 3 5-9" stroke="#0a40e0" stroke-width="2" fill="none"/></svg>
<div class="t" style="left:1392px;top:207.59px;font-size:12.3px;line-height:12.3px;">firetuk.wft</div>
<div style="left:1361px;top:819px;width:113px;height:16px;border:1px solid #3c7fb1;border-radius:2px;background:linear-gradient(180deg,#f2f2f2 0%,#ebebeb 50%,#dddddd 51%,#cfcfcf 100%);box-shadow:inset 0 0 0 1px #6ec3ef"></div>
<div style="left:1481px;top:819px;width:114px;height:16px;border:1px solid #707070;border-radius:2px;background:linear-gradient(180deg,#f2f2f2 0%,#ebebeb 50%,#dddddd 51%,#cfcfcf 100%)"></div>
<div class="t" style="left:1398px;top:822.01px;font-size:11.8px;line-height:11.8px;">Show all</div>
<div class="t" style="left:1519px;top:822.01px;font-size:11.8px;line-height:11.8px;">Hide all</div>
<div style="left:0px;top:839px;width:1600px;height:1px;background:#a0a0a0"></div>
<div style="left:0px;top:840px;width:1600px;height:20px;background:#f0f0f0"></div>
<div style="left:3px;top:841px;width:1px;height:18px;background:#a0a0a0"></div>
<div style="left:2px;top:841px;width:1px;height:18px;background:#fff"></div>
<div style="left:1250px;top:843px;width:102px;height:15px;background:#c4c4dc"></div>
<div class="t" style="left:1253px;top:846.27px;font-size:11.5px;line-height:11.5px;font-weight:bold;letter-spacing:-0.3px">SELECTED MODE</div>
<div style="left:1356px;top:843px;width:35px;height:15px;border-left:1px solid #a0a0a0;border-top:1px solid #a0a0a0"></div>
<div class="t" style="left:1360px;top:846.27px;font-size:11.5px;line-height:11.5px;font-weight:bold">Auto</div>
<div style="left:1394px;top:843px;width:190px;height:15px;border-left:1px solid #a0a0a0;border-top:1px solid #a0a0a0"></div>
<div class="t" style="left:1397px;top:846.69px;font-size:11px;line-height:11px;letter-spacing:-0.25px">Cursor: 3.76760, 3.16125, 4.35601</div>
<div style="left:0;top:860px;width:1600px;height:40px;background:linear-gradient(180deg,#3c7a35 0px,#1e5a17 2px,#1a5313 40px)"></div>
<div style="left:0;top:860px;width:1600px;height:40px;background:linear-gradient(115deg,rgba(255,255,255,0) 0%,rgba(255,255,255,.035) 3%,rgba(255,255,255,0) 6%,rgba(255,255,255,0) 28%,rgba(255,255,255,.03) 31%,rgba(255,255,255,0) 34%,rgba(255,255,255,0) 40%,rgba(255,255,255,.04) 45%,rgba(255,255,255,0) 50%)"></div>
<div style="left:0px;top:860px;width:1600px;height:1px;background:#0d2c0a"></div>
<div style="left:0px;top:861px;width:1600px;height:1px;background:rgba(255,255,255,.25)"></div>
<div style="left:122px;top:862px;width:58px;height:37px;border:1px solid rgba(220,255,220,.55);border-radius:3px;background:linear-gradient(180deg,rgba(255,255,255,.28),rgba(255,255,255,.10))"></div>
<div style="left:866px;top:862px;width:58px;height:37px;border:1px solid rgba(220,255,220,.55);border-radius:3px;background:linear-gradient(180deg,rgba(255,255,255,.28),rgba(255,255,255,.10))"></div>
<svg style="left:7px;top:862px;" width="40" height="38" viewBox="0 0 40 38"><defs><radialGradient id="orb" cx=".5" cy=".85" r=".75"><stop offset="0" stop-color="#30e0ff"/><stop offset=".45" stop-color="#1a70b8"/><stop offset="1" stop-color="#0a3060"/></radialGradient><linearGradient id="orbh" x1="0" y1="0" x2="0" y2="1"><stop offset="0" stop-color="#fff" stop-opacity=".75"/><stop offset="1" stop-color="#fff" stop-opacity=".1"/></linearGradient></defs><circle cx="20" cy="18.5" r="17.5" fill="url(#orb)" stroke="#2a5a40" stroke-width="1"/><ellipse cx="20" cy="10" rx="14" ry="8.5" fill="url(#orbh)"/><path d="M11 12c3-2 6-2 9-.5l-1.5 6.5c-3-1.5-6-1.5-9 .5z" fill="#f05a20"/><path d="M21 11.5c3 1.5 6 1.5 9-.5l-1.5 6.5c-3 2-6 2-9 .5z" fill="#80c030"/><path d="M9.5 19c3-2 6-2 9-.5l-1.5 6.5c-3-1.5-6-1.5-9 .5z" fill="#30a0f0"/><path d="M19.5 18.5c3 1.5 6 1.5 9-.5l-1.5 6.5c-3 2-6 2-9 .5z" fill="#f8c020"/></svg>
<svg style="left:73px;top:864px;" width="34" height="32" viewBox="0 0 34 32"><path d="M25.5 17.5H11.5c.5 4 3 6.5 6.5 6.5 2.5 0 4-1 5-2.5h3.5c-1.5 4-5 6.5-8.5 6.5-6 0-10.5-4.5-10.5-11s4.5-11 10.5-11 10 4.5 9.5 11.5zM11.5 14H22c-.5-3.5-2.5-6-5.3-6S12 10.5 11.5 14z" fill="#30b4f0" stroke="#1a80c0" stroke-width=".6"/><path d="M5 29C1 25 9 8 27 3c4-1 6 1 3 6" fill="none" stroke="#f0c010" stroke-width="2.6"/></svg>
<svg style="left:134px;top:864px;" width="34" height="34" viewBox="0 0 34 34"><circle cx="17" cy="17" r="14" fill="#e8382a"/><path d="M17 17L5 24A14 14 0 0 0 24 29z" fill="#2aa040"/><path d="M17 17l7 12A14 14 0 0 0 31 17z" fill="#f8c418"/><path d="M17 17h14A14 14 0 0 0 17 3 14 14 0 0 0 5 10z" fill="#e8382a"/><circle cx="17" cy="17" r="6.5" fill="#fff"/><circle cx="17" cy="17" r="5" fill="#3a78d8"/></svg>
<svg style="left:196px;top:866px;" width="34" height="30" viewBox="0 0 34 30"><path d="M2 5h10l2 2h16v20H2z" fill="#e8c468"/><rect x="6" y="3" width="9" height="4" fill="#f4f4f4"/><rect x="7" y="3" width="2" height="2" fill="#2a2"/><rect x="16" y="4" width="2" height="2" fill="#d22"/><rect x="21" y="5" width="2" height="2" fill="#22d"/><path d="M2 10h28v17H2z" fill="#f6dc90"/><path d="M7 27v-9h18v9h-4v-5H11v5z" fill="#7ab8e8"/></svg>
<svg style="left:258px;top:866px;" width="32" height="30" viewBox="0 0 32 30"><rect x="4" y="3" width="24" height="24" rx="2" fill="#78b4e0" stroke="#5a90b8"/><circle cx="15" cy="15" r="9" fill="#f28a20"/><path d="M12 10v10l8-5z" fill="#fff"/></svg>
<svg style="left:320px;top:864px;" width="32" height="34" viewBox="0 0 32 34"><circle cx="16" cy="17" r="14" fill="#12a8e8"/><path d="M21 11c-2-2-10-2-10 2s10 3 10 7-9 4-11 1" fill="none" stroke="#fff" stroke-width="3.5"/></svg>
<svg style="left:382px;top:864px;" width="34" height="34" viewBox="0 0 34 34"><path d="M10 4c12-2 20 6 19 18l-1 6h-4l1-6c1-8-4-14-12-14z" fill="#a8b4bc"/><path d="M10 4c-2 4-2 8 0 12l4 8c1 2 3 4 6 4h2" fill="none" stroke="#50606a" stroke-width="2.5"/><path d="M13 4c6 0 10 4 11 10" fill="none" stroke="#e0e8ee" stroke-width="1.5"/><circle cx="5" cy="15" r="3.5" fill="#3ad040" stroke="#206020"/><path d="M20 19l6-2 6 2v6c0 4-3 7-6 8-3-1-6-4-6-8z" fill="#f0f0f0"/><path d="M21 20l5-1v12c-2-1-5-3-5-6z" fill="#2a6ad8"/><path d="M26 19l5 1v5c0 3-3 5-5 6z" fill="#f8d020"/></svg>
<svg style="left:444px;top:864px;" width="34" height="34" viewBox="0 0 34 34"><circle cx="17" cy="17" r="14" fill="#fff"/><circle cx="17" cy="17" r="12" fill="#111"/><path d="M12 7v8h10V7" fill="none" stroke="#fff" stroke-width="2"/><rect x="10" y="15" width="14" height="12" rx="2" fill="#fff"/><text x="17" y="24" font-family="Liberation Sans" font-weight="bold" font-size="8" text-anchor="middle" fill="#000">BLE</text></svg>
<svg style="left:505px;top:864px;" width="34" height="34" viewBox="0 0 34 34"><circle cx="17" cy="17" r="15" fill="#000" stroke="#20e020" stroke-width="2"/><path d="M8 22c-3 0-3-5 0-5 0-5 6-7 9-3 3-3 8-1 8 3 3 0 3 5 0 5z" fill="#30e030"/></svg>
<svg style="left:568px;top:864px;" width="34" height="34" viewBox="0 0 34 34"><rect x="2" y="3" width="26" height="26" fill="#0a2a6a" stroke="#7ab0f0" stroke-width="2"/><text x="5" y="21" font-family="Liberation Sans" font-weight="bold" font-size="13" fill="#8ac4ff">Ps</text><path d="M20 18l7-2 7 2v7c0 4-4 7-7 8-3-1-7-4-7-8z" fill="#f0f0f0"/><path d="M22 20l5-1v12c-2-1-5-3-5-6z" fill="#2a6ad8"/><path d="M27 19l5 1v5c0 3-3 5-5 6z" fill="#f8d020"/></svg>
<svg style="left:630px;top:864px;" width="34" height="34" viewBox="0 0 34 34"><defs><radialGradient id="cam" cx=".5" cy=".5" r=".5"><stop offset="0" stop-color="#f0f4ff"/><stop offset=".25" stop-color="#8ab8e8"/><stop offset=".6" stop-color="#1a5aa8"/><stop offset="1" stop-color="#061428"/></radialGradient></defs><circle cx="17" cy="17" r="15" fill="url(#cam)" stroke="#b0b8c0" stroke-width="1.2"/><circle cx="17" cy="17" r="4" fill="#c07020" opacity=".8"/></svg>
<svg style="left:692px;top:864px;" width="34" height="34" viewBox="0 0 34 34"><rect x="2" y="2" width="30" height="30" rx="5" fill="#1a1a1a"/><rect x="2" y="2" width="30" height="15" rx="5" fill="#3a3a3a"/><circle cx="23" cy="12" r="5" fill="none" stroke="#ddd" stroke-width="2.5"/><circle cx="12" cy="24" r="3.5" fill="none" stroke="#ddd" stroke-width="2.5"/><path d="M3 18l9 6 8-9" stroke="#ddd" stroke-width="2.5" fill="none"/></svg>
<svg style="left:755px;top:864px;" width="34" height="34" viewBox="0 0 34 34"><circle cx="17" cy="17" r="15" fill="#84bd1a"/><path d="M8 12c6-2 13-1 18 2M9 17c5-2 11-1 15 1M10 22c4-1 9-1 12 1" stroke="#111" stroke-width="2.8" fill="none" stroke-linecap="round"/></svg>
<svg style="left:816px;top:864px;" width="34" height="34" viewBox="0 0 34 34"><circle cx="17" cy="18" r="11" fill="none" stroke="#f06a2a" stroke-width="7"/><path d="M17 1c3 2 3 5 1 8" stroke="#f06a2a" stroke-width="3" fill="none"/></svg>
<svg style="left:878px;top:864px;" width="34" height="34" viewBox="0 0 34 34"><rect x="1" y="1" width="31" height="32" fill="#f59a10"/><path d="M8 8h16l-11 13h12v5H5l11-13H8z" fill="#5a3000" opacity=".6" transform="translate(2,2)"/><path d="M7 7h16L12 20h12v5H4l11-13H7z" fill="#40208a"/><path d="M22 18l6-2 6 2v7c0 4-3 7-6 8-3-1-6-4-6-8z" fill="#f0f0f0"/><path d="M23 20l5-1v13c-2-1-5-3-5-7z" fill="#2a6ad8"/><path d="M28 19l5 1v5c0 3-3 5-5 7z" fill="#f8d020"/></svg>
<svg style="left:1421px;top:877px;" width="10" height="6" viewBox="0 0 10 6"><path d="M0 6h10L5 0z" fill="#fff"/></svg>
<svg style="left:1442px;top:871px;" width="16" height="18" viewBox="0 0 16 18"><rect x="0" y="12" width="2" height="5" fill="#50e030"/><rect x="3" y="10" width="2" height="7" fill="#50e030"/><rect x="6" y="7" width="2" height="10" fill="#50e030"/><rect x="9" y="4" width="2" height="13" fill="#50e030"/><rect x="12" y="1" width="2" height="16" fill="#50e030"/></svg>
<svg style="left:1467px;top:871px;" width="17" height="18" viewBox="0 0 17 18"><path d="M1 1v16" stroke="#fff" stroke-width="2"/><path d="M2 2h6l2 2h5l-2 3 2 3H9l-2-2H2z" fill="#fff"/></svg>
<svg style="left:1491px;top:871px;" width="16" height="18" viewBox="0 0 16 18"><path d="M1 6h3l5-4v14l-5-4H1z" fill="#fff"/><path d="M11 5c2 2 2 6 0 8M13 3c3 3 3 9 0 12" stroke="#fff" stroke-width="1.3" fill="none"/></svg>
<div class="t" style="left:1524px;top:866.59px;font-size:12.3px;line-height:12.3px;color:#fff">11:20 AM</div>
<div class="t" style="left:1526px;top:883.59px;font-size:12.3px;line-height:12.3px;color:#fff">4/2/2014</div>
<div style="left:1586px;top:862px;width:13px;height:37px;border:1px solid rgba(255,255,255,.35);border-radius:2px;background:linear-gradient(180deg,rgba(255,255,255,.2),rgba(255,255,255,.05))"></div>
<svg style="left:148px;top:213px;" width="610" height="278" viewBox="0 0 610 278"><g transform="translate(-148,-213)"><defs><clipPath id="cca"><path d="M297 322L462 304 462 398 422 407C420 385 405 380 390 380 370 380 356 395 354 430L300 447z"/></clipPath><clipPath id="rba"><path d="M508 300L610 296 607 346 560 368 510 380z"/></clipPath><clipPath id="rfa"><path d="M253 312L462 300 462 306 297 323z"/></clipPath></defs><g transform=""><path d="M580 270h28v26h-28z" fill="#d4d4d4" opacity=".75"/><path d="M582 272l4 23M590 270l1 26M597 271l4 24M605 271l-2 25M580 283h28" stroke="#9a9a9a" stroke-width="1"/><path d="M500 300L610 296 607 346 560 370 503 384 500 384z" fill="#646464"/><g clip-path="url(#rba)"><path d="M499.2 290.9L517.1 294.5M499.2 290.9L507.1 311.1M499.2 290.9L527.2 305.0M507.1 311.1L527.2 305.0M507.1 311.1L500.1 334.5M507.1 311.1L532.1 339.9M500.1 334.5L532.1 339.9M500.1 334.5L494.7 355.0M532.1 339.9L494.7 355.0M494.7 355.0L526.6 356.5M494.7 355.0L502.2 380.6M526.6 356.5L502.2 380.6M502.2 380.6L518.2 369.4M502.2 380.6L493.2 395.2M518.2 369.4L493.2 395.2M493.2 395.2L524.5 391.7M517.1 294.5L542.8 286.3M517.1 294.5L540.1 311.1M527.2 305.0L540.1 311.1M527.2 305.0L532.1 339.9M527.2 305.0L547.0 338.1M532.1 339.9L547.0 338.1M532.1 339.9L526.6 356.5M532.1 339.9L548.3 356.8M526.6 356.5L548.3 356.8M526.6 356.5L518.2 369.4M548.3 356.8L518.2 369.4M518.2 369.4L548.0 378.7M518.2 369.4L524.5 391.7M548.0 378.7L524.5 391.7M524.5 391.7L547.3 394.8M542.8 286.3L580.4 297.1M542.8 286.3L577.7 314.6M540.1 311.1L577.7 314.6M577.7 314.6L547.0 338.1M547.0 338.1L568.9 329.3M547.0 338.1L548.3 356.8M568.9 329.3L548.3 356.8M548.3 356.8L548.0 378.7M568.5 348.6L548.0 378.7M548.0 378.7L547.3 394.8M548.0 378.7L577.8 396.4M547.3 394.8L577.8 396.4M580.4 297.1L603.7 295.0M580.4 297.1L587.6 307.4M577.7 314.6L587.6 307.4M577.7 314.6L568.9 329.3M587.6 307.4L568.9 329.3M568.9 329.3L602.9 332.8M568.9 329.3L568.5 348.6M568.9 329.3L604.1 353.3M568.5 348.6L604.1 353.3M568.5 348.6L576.5 375.0M568.5 348.6L588.8 378.3M576.5 375.0L588.8 378.3M588.8 378.3L577.8 396.4M577.8 396.4L600.7 394.7M603.7 295.0L587.6 307.4M603.7 295.0L627.8 315.3M587.6 307.4L627.8 315.3M587.6 307.4L602.9 332.8M587.6 307.4L613.6 329.5M602.9 332.8L613.6 329.5M602.9 332.8L604.1 353.3M613.6 329.5L604.1 353.3M604.1 353.3L613.3 348.5M604.1 353.3L588.8 378.3M613.3 348.5L588.8 378.3M588.8 378.3L600.7 394.7M625.0 371.8L600.7 394.7M600.7 394.7L621.0 397.2M613.1 287.6L627.8 315.3M627.8 315.3L613.6 329.5M613.6 329.5L613.3 348.5M625.0 371.8L621.0 397.2" stroke="#262626" stroke-width="0.8" fill="none"/></g><path d="M475 298L610 295 609 302 508 306 475 310z" fill="#4a4a4a"/><path d="M508 306L609 302" stroke="#9a9a9a" stroke-width="1"/><path d="M510 340L607 322M510 344L607 326M510 372L606 342M530 305v72M548 303v68M565 302v62M578 301v56M598 300v48" stroke="#333" stroke-width="1.1"/><path d="M556 318h5v4h-5zM588 313h5v4h-5zM540 350h5v4h-5zM600 335h4v4h-4z" fill="#222"/><path d="M545 333l55-9v20l-40 20-15 4z" fill="#a0a0a0" opacity=".55"/><path d="M500 307h9v72h-9z" fill="#c8c8c8"/><path d="M500 312h9M500 317h9M500 322h9M500 327h9M500 332h9M500 337h9M500 342h9M500 347h9M500 352h9M500 357h9M500 362h9M500 367h9M500 372h9" stroke="#a4a4a4" stroke-width=".6"/><defs><linearGradient id="pp{uid}" x1="0" y1="0" x2="1" y2="1"><stop offset="0" stop-color="#a8b0bc"/><stop offset=".5" stop-color="#6c7484"/><stop offset="1" stop-color="#4c5260"/></linearGradient></defs><path d="M462 317l38-4v62l-38 9z" fill="url(#pp{uid})"/><path d="M477 338h7v32h-7z" fill="#9a3a78"/><path d="M478 322h6v12h-6z" fill="#303030" opacity=".7"/><circle cx="469" cy="338" r="4.5" fill="none" stroke="#333" stroke-width="1.5" opacity=".7"/><path d="M488 357l6 2-2 9-5-3z" fill="#c09030" opacity=".8"/><path d="M486 318v62" stroke="#555" stroke-width=".8"/><path d="M462 385l40-8v9l-40 13z" fill="#2c2c2c"/><path d="M462 306l40-4v12l-40 4z" fill="#3a3a3a"/><path d="M462 316l40-4" stroke="#777" stroke-width="1"/><path d="M297 322L462 304 462 398 422 407C420 385 405 380 390 380 370 380 356 395 354 430L300 447z" fill="#6c6c6c"/><g clip-path="url(#cca)"><path d="M298.4 288.5L319.4 302.3M298.4 288.5L292.5 319.1M319.4 302.3L292.5 319.1M292.5 319.1L322.8 318.1M292.5 319.1L294.2 340.0M322.8 318.1L294.2 340.0M294.2 340.0L321.3 348.5M294.2 340.0L317.3 368.1M299.1 359.6L317.3 368.1M299.1 359.6L290.8 393.3M317.3 368.1L290.8 393.3M290.8 393.3L313.9 390.9M290.8 393.3L297.3 416.7M313.9 390.9L297.3 416.7M297.3 416.7L318.0 406.5M318.0 406.5L293.7 441.0M293.7 441.0L297.6 457.5M318.5 444.1L297.6 457.5M297.6 457.5L322.9 463.4M319.4 302.3L343.5 318.5M322.8 318.1L343.5 318.5M322.8 318.1L321.3 348.5M343.5 318.5L321.3 348.5M321.3 348.5L348.2 336.3M321.3 348.5L317.3 368.1M321.3 348.5L346.6 358.9M317.3 368.1L346.6 358.9M317.3 368.1L313.9 390.9M346.6 358.9L313.9 390.9M313.9 390.9L343.8 389.3M313.9 390.9L318.0 406.5M343.8 389.3L318.0 406.5M318.0 406.5L337.1 416.1M318.0 406.5L318.5 444.1M337.1 416.1L318.5 444.1M318.5 444.1L341.9 438.2M318.5 444.1L322.9 463.4M341.9 438.2L322.9 463.4M340.0 299.7L359.1 292.9M340.0 299.7L371.2 314.8M343.5 318.5L371.2 314.8M343.5 318.5L348.2 336.3M343.5 318.5L362.0 349.1M348.2 336.3L362.0 349.1M348.2 336.3L346.6 358.9M362.0 349.1L346.6 358.9M346.6 358.9L370.9 365.3M346.6 358.9L343.8 389.3M346.6 358.9L375.1 386.9M343.8 389.3L375.1 386.9M343.8 389.3L337.1 416.1M375.1 386.9L337.1 416.1M337.1 416.1L371.0 408.3M371.0 408.3L341.9 438.2M341.9 438.2L366.7 441.2M341.9 438.2L349.7 456.0M341.9 438.2L375.5 465.7M349.7 456.0L375.5 465.7M359.1 292.9L391.9 297.3M359.1 292.9L371.2 314.8M359.1 292.9L390.7 313.7M371.2 314.8L362.0 349.1M371.2 314.8L393.9 348.1M362.0 349.1L393.9 348.1M362.0 349.1L370.9 365.3M362.0 349.1L400.3 369.5M370.9 365.3L400.3 369.5M370.9 365.3L375.1 386.9M400.3 369.5L375.1 386.9M375.1 386.9L402.2 386.1M402.2 386.1L371.0 408.3M371.0 408.3L388.0 412.2M371.0 408.3L366.7 441.2M371.0 408.3L389.9 431.9M366.7 441.2L389.9 431.9M366.7 441.2L375.5 465.7M389.9 431.9L375.5 465.7M375.5 465.7L392.4 461.8M391.9 297.3L419.9 293.1M391.9 297.3L390.7 313.7M419.9 293.1L390.7 313.7M390.7 313.7L393.9 348.1M426.2 326.9L393.9 348.1M393.9 348.1L419.1 336.2M393.9 348.1L400.3 369.5M393.9 348.1L411.5 372.0M400.3 369.5L411.5 372.0M400.3 369.5L402.2 386.1M400.3 369.5L411.7 392.9M402.2 386.1L411.7 392.9M402.2 386.1L388.0 412.2M411.7 392.9L388.0 412.2M388.0 412.2L421.3 410.0M388.0 412.2L389.9 431.9M388.0 412.2L425.3 428.9M389.9 431.9L425.3 428.9M389.9 431.9L392.4 461.8M389.9 431.9L413.4 459.1M392.4 461.8L413.4 459.1M419.9 293.1L437.4 301.1M419.9 293.1L426.2 326.9M419.9 293.1L441.2 313.8M426.2 326.9L441.2 313.8M426.2 326.9L419.1 336.2M441.2 313.8L419.1 336.2M419.1 336.2L437.8 344.8M437.8 344.8L411.5 372.0M411.5 372.0L411.7 392.9M445.0 368.2L411.7 392.9M411.7 392.9L448.8 394.4M411.7 392.9L454.3 415.9M421.3 410.0L454.3 415.9M421.3 410.0L440.5 436.0M425.3 428.9L440.2 452.2M413.4 459.1L440.2 452.2M437.4 301.1L471.5 299.3M437.4 301.1L441.2 313.8M437.4 301.1L466.2 315.8M441.2 313.8L466.2 315.8M441.2 313.8L437.8 344.8M466.2 315.8L437.8 344.8M437.8 344.8L469.2 345.9M437.8 344.8L445.0 368.2M469.2 345.9L445.0 368.2M445.0 368.2L472.4 368.0M445.0 368.2L448.8 394.4M472.4 368.0L448.8 394.4M448.8 394.4L477.3 419.3M454.3 415.9L477.3 419.3M454.3 415.9L440.5 436.0M477.3 419.3L440.5 436.0M440.5 436.0L464.5 443.1M440.5 436.0L440.2 452.2M440.5 436.0L476.0 454.0M440.2 452.2L476.0 454.0M471.5 299.3L466.2 315.8M466.2 315.8L469.2 345.9M469.2 345.9L472.4 368.0M472.4 368.0L476.7 387.9M476.7 387.9L477.3 419.3M477.3 419.3L464.5 443.1M464.5 443.1L476.0 454.0" stroke="#1a1a1a" stroke-width="0.9" fill="none"/></g><path d="M253 312L325 305 462 299 475 297 462 306 297 323z" fill="#4e4e4e"/><g clip-path="url(#rfa)"><path d="M252.1 298.6L259.1 295.6M252.1 298.6L252.7 301.9M252.1 298.6L259.6 301.5M252.7 301.9L259.6 301.5M252.7 301.9L247.2 314.6M259.6 301.5L247.2 314.6M247.2 314.6L260.3 314.1M247.2 314.6L249.8 321.7M247.2 314.6L257.0 320.1M249.8 321.7L257.0 320.1M249.8 321.7L248.9 328.2M249.8 321.7L260.5 327.9M248.9 328.2L260.5 327.9M259.1 295.6L266.1 294.2M259.1 295.6L259.6 301.5M266.1 294.2L259.6 301.5M259.6 301.5L268.1 301.5M259.6 301.5L260.3 314.1M268.1 301.5L260.3 314.1M260.3 314.1L270.5 313.8M260.3 314.1L257.0 320.1M270.5 313.8L257.0 320.1M257.0 320.1L269.3 322.2M257.0 320.1L260.5 327.9M269.3 322.2L260.5 327.9M260.5 327.9L268.8 327.9M266.1 294.2L277.6 296.0M266.1 294.2L268.1 301.5M277.6 296.0L268.1 301.5M268.1 301.5L280.0 305.7M268.1 301.5L270.5 313.8M280.0 305.7L270.5 313.8M270.5 313.8L269.3 322.2M275.5 314.4L269.3 322.2M269.3 322.2L278.5 321.8M269.3 322.2L268.8 327.9M269.3 322.2L279.0 327.9M268.8 327.9L279.0 327.9M277.6 296.0L288.5 298.1M277.6 296.0L280.0 305.7M288.5 298.1L280.0 305.7M280.0 305.7L287.2 305.5M280.0 305.7L275.5 314.4M280.0 305.7L287.7 311.7M275.5 314.4L287.7 311.7M275.5 314.4L278.5 321.8M287.7 311.7L278.5 321.8M278.5 321.8L287.4 318.0M278.5 321.8L279.0 327.9M278.5 321.8L285.0 328.2M279.0 327.9L285.0 328.2M288.5 298.1L291.9 295.2M288.5 298.1L287.2 305.5M288.5 298.1L295.9 304.8M287.2 305.5L295.9 304.8M287.2 305.5L287.7 311.7M295.9 304.8L287.7 311.7M287.7 311.7L293.3 314.6M287.7 311.7L287.4 318.0M287.7 311.7L296.0 319.4M287.4 318.0L296.0 319.4M287.4 318.0L285.0 328.2M296.0 319.4L285.0 328.2M285.0 328.2L296.0 328.8M291.9 295.2L304.2 295.4M291.9 295.2L295.9 304.8M291.9 295.2L307.1 304.9M295.9 304.8L307.1 304.9M295.9 304.8L293.3 314.6M295.9 304.8L305.3 313.6M293.3 314.6L305.3 313.6M293.3 314.6L296.0 319.4M293.3 314.6L307.0 317.7M296.0 319.4L307.0 317.7M307.0 317.7L296.0 328.8M296.0 328.8L304.7 329.7M304.2 295.4L311.5 295.5M304.2 295.4L310.2 302.5M307.1 304.9L310.2 302.5M307.1 304.9L305.3 313.6M310.2 302.5L305.3 313.6M305.3 313.6L312.2 310.0M305.3 313.6L307.0 317.7M312.2 310.0L307.0 317.7M307.0 317.7L311.4 322.5M307.0 317.7L304.7 329.7M311.4 322.5L304.7 329.7M304.7 329.7L313.3 328.4M311.5 295.5L324.9 296.4M311.5 295.5L310.2 302.5M311.5 295.5L325.1 304.8M310.2 302.5L325.1 304.8M310.2 302.5L312.2 310.0M325.1 304.8L312.2 310.0M312.2 310.0L324.0 309.9M312.2 310.0L311.4 322.5M312.2 310.0L322.6 321.7M311.4 322.5L322.6 321.7M311.4 322.5L313.3 328.4M322.6 321.7L313.3 328.4M313.3 328.4L319.1 330.7M324.9 296.4L328.9 295.8M324.9 296.4L328.9 304.1M325.1 304.8L328.9 304.1M325.1 304.8L324.0 309.9M328.9 304.1L324.0 309.9M324.0 309.9L331.7 309.8M324.0 309.9L322.6 321.7M331.7 309.8L322.6 321.7M322.6 321.7L333.8 319.9M322.6 321.7L319.1 330.7M322.6 321.7L331.2 328.9M319.1 330.7L331.2 328.9M328.9 295.8L339.2 294.8M328.9 295.8L328.9 304.1M328.9 295.8L341.0 304.4M328.9 304.1L331.7 309.8M341.0 304.4L331.7 309.8M331.7 309.8L338.6 313.4M331.7 309.8L333.8 319.9M331.7 309.8L338.7 317.7M333.8 319.9L331.2 328.9M338.7 317.7L331.2 328.9M331.2 328.9L338.4 325.9M339.2 294.8L346.8 297.4M339.2 294.8L341.0 304.4M339.2 294.8L348.3 306.2M341.0 304.4L348.3 306.2M341.0 304.4L338.6 313.4M341.0 304.4L350.6 309.8M338.6 313.4L350.6 309.8M338.6 313.4L338.7 317.7M338.6 313.4L352.1 322.7M338.7 317.7L352.1 322.7M338.7 317.7L338.4 325.9M352.1 322.7L338.4 325.9M338.4 325.9L346.3 330.6M346.8 297.4L357.6 295.9M346.8 297.4L348.3 306.2M357.6 295.9L348.3 306.2M348.3 306.2L361.0 302.7M348.3 306.2L350.6 309.8M348.3 306.2L358.1 314.6M350.6 309.8L358.1 314.6M350.6 309.8L352.1 322.7M350.6 309.8L359.4 320.1M352.1 322.7L359.4 320.1M352.1 322.7L346.3 330.6M352.1 322.7L361.0 330.1M357.6 295.9L367.7 293.9M357.6 295.9L361.0 302.7M367.7 293.9L361.0 302.7M361.0 302.7L367.8 303.9M361.0 302.7L358.1 314.6M367.8 303.9L358.1 314.6M358.1 314.6L365.1 309.8M358.1 314.6L359.4 320.1M358.1 314.6L367.2 318.3M359.4 320.1L367.2 318.3M359.4 320.1L361.0 330.1M359.4 320.1L366.6 329.3M361.0 330.1L366.6 329.3M367.7 293.9L375.7 294.7M375.7 294.7L367.8 303.9M367.8 303.9L376.5 303.7M367.8 303.9L365.1 309.8M376.5 303.7L365.1 309.8M365.1 309.8L377.8 312.4M365.1 309.8L367.2 318.3M365.1 309.8L379.1 322.7M367.2 318.3L379.1 322.7M367.2 318.3L366.6 329.3M367.2 318.3L377.5 327.0M366.6 329.3L377.5 327.0M375.7 294.7L382.6 298.1M375.7 294.7L376.5 303.7M375.7 294.7L386.8 304.8M376.5 303.7L386.8 304.8M376.5 303.7L377.8 312.4M376.5 303.7L384.1 311.0M377.8 312.4L384.1 311.0M377.8 312.4L379.1 322.7M384.1 311.0L379.1 322.7M379.1 322.7L386.2 320.7M379.1 322.7L377.5 327.0M386.2 320.7L377.5 327.0M377.5 327.0L385.6 329.1M382.6 298.1L395.6 294.3M382.6 298.1L386.8 304.8M382.6 298.1L392.4 306.7M386.8 304.8L392.4 306.7M386.8 304.8L384.1 311.0M386.8 304.8L396.6 314.2M384.1 311.0L396.6 314.2M396.6 314.2L386.2 320.7M386.2 320.7L391.1 317.9M386.2 320.7L385.6 329.1M386.2 320.7L392.6 328.0M385.6 329.1L392.6 328.0M395.6 294.3L403.8 293.9M395.6 294.3L392.4 306.7M395.6 294.3L403.3 301.8M392.4 306.7L403.3 301.8M392.4 306.7L396.6 314.2M403.3 301.8L396.6 314.2M396.6 314.2L400.4 313.2M396.6 314.2L391.1 317.9M396.6 314.2L403.3 321.0M391.1 317.9L403.3 321.0M403.3 321.0L392.6 328.0M392.6 328.0L402.2 328.3M403.8 293.9L410.2 295.2M403.8 293.9L403.3 301.8M410.2 295.2L403.3 301.8M403.3 301.8L400.4 313.2M413.5 305.9L400.4 313.2M400.4 313.2L409.3 310.1M400.4 313.2L403.3 321.0M409.3 310.1L403.3 321.0M403.3 321.0L413.9 321.0M403.3 321.0L402.2 328.3M403.3 321.0L413.7 326.9M402.2 328.3L413.7 326.9M410.2 295.2L420.5 294.7M410.2 295.2L413.5 305.9M410.2 295.2L423.0 303.4M413.5 305.9L409.3 310.1M413.5 305.9L422.0 314.8M409.3 310.1L422.0 314.8M409.3 310.1L419.9 320.6M413.9 321.0L413.7 326.9M419.9 320.6L413.7 326.9M413.7 326.9L422.6 330.7M420.5 294.7L429.5 295.3M429.5 295.3L423.0 303.4M423.0 303.4L427.5 306.1M423.0 303.4L422.0 314.8M423.0 303.4L427.3 309.9M422.0 314.8L427.3 309.9M422.0 314.8L419.9 320.6M427.3 309.9L419.9 320.6M419.9 320.6L430.4 320.2M419.9 320.6L422.6 330.7M430.4 320.2L422.6 330.7M422.6 330.7L431.2 327.3M429.5 295.3L440.7 293.7M429.5 295.3L427.5 306.1M429.5 295.3L437.2 305.0M427.5 306.1L437.2 305.0M437.2 305.0L427.3 309.9M427.3 309.9L436.4 311.1M427.3 309.9L430.4 320.2M436.4 311.1L430.4 320.2M430.4 320.2L440.4 321.3M430.4 320.2L431.2 327.3M440.4 321.3L431.2 327.3M431.2 327.3L437.6 326.5M440.7 293.7L447.1 297.2M440.7 293.7L437.2 305.0M440.7 293.7L447.2 302.0M437.2 305.0L447.2 302.0M437.2 305.0L436.4 311.1M447.2 302.0L436.4 311.1M436.4 311.1L449.3 312.6M436.4 311.1L440.4 321.3M436.4 311.1L450.6 322.7M440.4 321.3L450.6 322.7M440.4 321.3L437.6 326.5M450.6 322.7L437.6 326.5M437.6 326.5L450.6 328.1M447.1 297.2L458.9 294.9M447.1 297.2L447.2 302.0M458.9 294.9L447.2 302.0M447.2 302.0L455.9 303.6M447.2 302.0L449.3 312.6M447.2 302.0L459.7 314.3M449.3 312.6L459.7 314.3M449.3 312.6L450.6 322.7M459.7 314.3L450.6 322.7M450.6 322.7L455.4 319.6M450.6 322.7L450.6 328.1M455.4 319.6L450.6 328.1M450.6 328.1L456.2 327.7M458.9 294.9L455.9 303.6M458.9 294.9L464.1 304.4M455.9 303.6L464.1 304.4M464.1 304.4L459.7 314.3M459.7 314.3L467.9 312.4M459.7 314.3L455.4 319.6M467.9 312.4L455.4 319.6M455.4 319.6L468.1 320.6M455.4 319.6L456.2 327.7M468.1 320.6L456.2 327.7M465.3 295.4L477.4 294.8M465.3 295.4L464.1 304.4M477.4 294.8L464.1 304.4M464.1 304.4L472.0 304.2M464.1 304.4L467.9 312.4M464.1 304.4L475.3 312.6M467.9 312.4L475.3 312.6M467.9 312.4L468.1 320.6M475.3 312.6L468.1 320.6M468.1 320.6L477.9 321.1M468.1 320.6L464.0 329.8M477.9 321.1L464.0 329.8M464.0 329.8L476.9 326.0M477.4 294.8L472.0 304.2M472.0 304.2L475.3 312.6M475.3 312.6L477.9 321.1M477.9 321.1L476.9 326.0" stroke="#222" stroke-width="0.6" fill="none"/></g><path d="M253 312L297 322 462 305" stroke="#a8a8a8" stroke-width="1.2" fill="none"/><path d="M302 323l46-1v34l-45 9z" fill="#2e2e2e"/><path d="M305 326l40-2v30l-40 7z" fill="#8c8c8c"/><path d="M322 326h12v32h-12z" fill="#b4b4b4"/><path d="M306 330l9-1v30h-9z" fill="#6a6a6a"/><path d="M336 325h7v30h-7z" fill="#a0a0a0"/><path d="M376 317l38-3v33l-38 5z" fill="#2e2e2e"/><path d="M378 319l16-1v31l-16 2z" fill="#d4d4d4"/><path d="M384 330l10-2v21l-10 2z" fill="#9a9a9a"/><path d="M396 318l16-2v30l-16 2z" fill="#a4a4a4"/><path d="M422 311l31-3v30l-31 5z" fill="#2e2e2e"/><path d="M424 313l27-3v26l-27 4z" fill="#9c9c9c"/><path d="M430 314h8v24h-8z" fill="#c0c0c0"/><path d="M364 338h10v46h-10z" fill="#151515"/><path d="M355 353h7v34h-7z" fill="#505050"/><path d="M297 323v122" stroke="#b0b0b0" stroke-width="2.5"/><path d="M422 311v96" stroke="#999" stroke-width="1"/></g><g transform=""><path d="M253 312L297 326 297 445 262 418 247 351z" fill="#3e3e3e"/><path d="M253 312L296 326 287 376 248 351z" fill="#2c2c2c"/><path d="M268 322l25 8-2 22-9-6-16 2z" fill="#d8d8d8"/><path d="M254 316l8 3-3 26-6 3z" fill="#c8c8c8"/><path d="M262 380l26 12v50l-22-26z" fill="#4a4a4a"/><path d="M288 380h10v60h-10z" fill="#888" opacity=".6"/><path d="M289 382h4v6h-4zM293 390h4v6h-4zM289 398h4v6h-4zM293 406h4v6h-4zM289 420h4v6h-4zM293 428h4v6h-4z" fill="#000"/><path d="M228 405L246 400 296 430 300 447 263 463 236 436z" fill="#4a4a4a"/><path d="M228 405L236 436 263 463 260 450 240 428z" fill="#6e6e6e"/><path d="M240 413l16 2 34 22-20 8-20-18z" fill="#1e1e1e"/><path d="M256 440l40-4v10l-33 17z" fill="#4a4a4a"/><path d="M260 452l12-3 2 10-10 4z" fill="#9a9a9a"/><rect x="281" y="445" width="13" height="7" fill="#a08438"/><circle cx="267" cy="421" r="3.5" fill="#999"/><path d="M234 350l6 45 10 28M232 392l4 20" stroke="#555" stroke-width="1" fill="none"/></g><g transform=""><path d="M350 436c2-32 20-54 40-54 22 0 36 18 36 32l-5 2c-2-14-14-26-31-26-20 0-32 18-33 48z" fill="#303030"/><path d="M350 436c1-20 8-34 18-44l3 2c-9 10-15 24-16 42z" fill="#c8c8c8"/><path d="M420 408c0-8-6-20-14-24 8 2 18 12 18 22z" fill="#3a3a3a"/><ellipse cx="387" cy="417" rx="29" ry="32" fill="#1a1a1a"/><ellipse cx="389" cy="418" rx="18" ry="20" fill="#b81414"/><ellipse cx="389" cy="418" rx="12" ry="14" fill="none" stroke="#3a0606" stroke-width="2.6" stroke-dasharray="2.2 2.2"/><ellipse cx="389" cy="418" rx="16.5" ry="18.5" fill="none" stroke="#ff6060" stroke-width=".8" opacity=".5"/><circle cx="390" cy="419" r="6" fill="#2a2a2a"/><path d="M378 402c6-6 18-4 22 6" stroke="#ff8080" stroke-width="1.2" fill="none" opacity=".6"/><ellipse cx="555" cy="359" rx="16.5" ry="20" fill="#1a1a1a"/><ellipse cx="558.5" cy="360" rx="8" ry="13" fill="#b81414"/><ellipse cx="558.5" cy="360" rx="5" ry="9" fill="#5a0a0a"/><circle cx="559" cy="360" r="2.5" fill="#222"/><ellipse cx="580" cy="351.5" rx="12.5" ry="18" fill="#1a1a1a"/><ellipse cx="583" cy="352" rx="7" ry="12" fill="#b81414"/><ellipse cx="583" cy="352" rx="4.2" ry="8.2" fill="#5a0a0a"/><circle cx="583.5" cy="352" r="2.2" fill="#222"/></g><g transform=""><path d="M181.5 252.5L563 262 570 270 583 288 582 294 540 295 390 301 300 307 253 311.5 237 311 235 307C215 307 198 304 180 295 165 288 159 280 159 272 159 262 168 255 181.5 252.5z" fill="#000"/><path d="M178 259L193 259 214 295 207 297 192 297C180 294 172 289 167 273 167 267 170 262 178 259z" fill="#e3e3e3"/><path d="M197 259L220 294" stroke="#e6e6e6" stroke-width="1.2"/><path d="M212 265L231 294" stroke="#e6e6e6" stroke-width="2.4"/><path d="M224 265L242 294" stroke="#e6e6e6" stroke-width="2.4"/><path d="M236 265L253 294" stroke="#e6e6e6" stroke-width="3"/><path d="M247 265L264 294" stroke="#e6e6e6" stroke-width="3"/><path d="M258 265L274 293" stroke="#e6e6e6" stroke-width="2.6"/><path d="M269 265L283 293" stroke="#e6e6e6" stroke-width="1"/><path d="M300 265L314 292" stroke="#e6e6e6" stroke-width="1.8"/><path d="M310 265L324 292" stroke="#e6e6e6" stroke-width="1.6"/><path d="M318 266L332 292" stroke="#e6e6e6" stroke-width="1.6"/><path d="M327 266L341 292" stroke="#e6e6e6" stroke-width="1.4"/><path d="M337 266L349 290" stroke="#e6e6e6" stroke-width="1.1"/><path d="M361 268L373 291" stroke="#e6e6e6" stroke-width="1"/><path d="M368 268L380 290" stroke="#e6e6e6" stroke-width="1"/><path d="M376 268L388 290" stroke="#e6e6e6" stroke-width="1"/><path d="M393 268L405 290" stroke="#e6e6e6" stroke-width="1"/><path d="M402 268L412 288" stroke="#e6e6e6" stroke-width="1"/><path d="M410 268L420 288" stroke="#e6e6e6" stroke-width="0.8"/><path d="M434 270L444 288" stroke="#e6e6e6" stroke-width="0.8"/><path d="M440 270L450 288" stroke="#e6e6e6" stroke-width="0.8"/><path d="M478 271L486 287" stroke="#e6e6e6" stroke-width="0.8"/><path d="M548 268l8 14M553 268l8 14M558 268l8 14M563 269l7 13M568 271l6 11M573 276l4 8" stroke="#c8c8c8" stroke-width=".9"/><path d="M465 281h10v22l-5 12-5-12z" fill="#d4d4d4"/><path d="M452 300l34-3-12 8z" fill="#c8c8c8"/></g><g transform=""><g fill="#0020ff"><rect x="265" y="339" width="3" height="3"/><rect x="324" y="340" width="3" height="3"/><rect x="386" y="331" width="3" height="2"/><rect x="405" y="328" width="3" height="2"/><rect x="437" y="323" width="3" height="2"/><rect x="250" y="372" width="2" height="3"/><rect x="252" y="386" width="2" height="3"/><rect x="262" y="407" width="2" height="2"/><rect x="269" y="415" width="2" height="2"/></g><g fill="#00c000"><rect x="297" y="389" width="3" height="3"/><rect x="422" y="360" width="2" height="2"/></g></g></g></svg>
<svg style="left:150px;top:448px;" width="40" height="42" viewBox="0 0 40 42"><path d="M6.5 8v25.5" stroke="#005000"/><path d="M6.5 33.5l14-5" stroke="#888"/><path d="M6.5 33.5l14 5" stroke="#900"/><text x="3" y="9" font-family="Liberation Mono" font-weight="bold" font-size="10" fill="#008000">y</text><text x="20" y="32" font-family="Liberation Mono" font-weight="bold" font-size="10" fill="#00f">z</text><text x="20" y="41" font-family="Liberation Mono" font-weight="bold" font-size="10" fill="#f00">x</text></svg>
<svg style="left:148px;top:523px;" width="611" height="258" viewBox="0 0 611 258"><g transform="translate(-148,-523)"><defs><clipPath id="ccb"><path d="M297 322L462 304 462 398 422 407C420 385 405 380 390 380 370 380 356 395 354 430L300 447z"/></clipPath><clipPath id="rbb"><path d="M508 300L610 296 607 346 560 368 510 380z"/></clipPath><clipPath id="rfb"><path d="M253 312L462 300 462 306 297 323z"/></clipPath></defs><g transform="matrix(0.8023,-0.0318,0.0262,0.9205,84.52,343.10)"><path d="M580 270h28v26h-28z" fill="#d4d4d4" opacity=".75"/><path d="M582 272l4 23M590 270l1 26M597 271l4 24M605 271l-2 25M580 283h28" stroke="#9a9a9a" stroke-width="1"/><path d="M500 300L610 296 607 346 560 370 503 384 500 384z" fill="#646464"/><g clip-path="url(#rbb)"><path d="M499.2 290.9L517.1 294.5M499.2 290.9L507.1 311.1M499.2 290.9L527.2 305.0M507.1 311.1L527.2 305.0M507.1 311.1L500.1 334.5M507.1 311.1L532.1 339.9M500.1 334.5L532.1 339.9M500.1 334.5L494.7 355.0M532.1 339.9L494.7 355.0M494.7 355.0L526.6 356.5M494.7 355.0L502.2 380.6M526.6 356.5L502.2 380.6M502.2 380.6L518.2 369.4M502.2 380.6L493.2 395.2M518.2 369.4L493.2 395.2M493.2 395.2L524.5 391.7M517.1 294.5L542.8 286.3M517.1 294.5L540.1 311.1M527.2 305.0L540.1 311.1M527.2 305.0L532.1 339.9M527.2 305.0L547.0 338.1M532.1 339.9L547.0 338.1M532.1 339.9L526.6 356.5M532.1 339.9L548.3 356.8M526.6 356.5L548.3 356.8M526.6 356.5L518.2 369.4M548.3 356.8L518.2 369.4M518.2 369.4L548.0 378.7M518.2 369.4L524.5 391.7M548.0 378.7L524.5 391.7M524.5 391.7L547.3 394.8M542.8 286.3L580.4 297.1M542.8 286.3L577.7 314.6M540.1 311.1L577.7 314.6M577.7 314.6L547.0 338.1M547.0 338.1L568.9 329.3M547.0 338.1L548.3 356.8M568.9 329.3L548.3 356.8M548.3 356.8L548.0 378.7M568.5 348.6L548.0 378.7M548.0 378.7L547.3 394.8M548.0 378.7L577.8 396.4M547.3 394.8L577.8 396.4M580.4 297.1L603.7 295.0M580.4 297.1L587.6 307.4M577.7 314.6L587.6 307.4M577.7 314.6L568.9 329.3M587.6 307.4L568.9 329.3M568.9 329.3L602.9 332.8M568.9 329.3L568.5 348.6M568.9 329.3L604.1 353.3M568.5 348.6L604.1 353.3M568.5 348.6L576.5 375.0M568.5 348.6L588.8 378.3M576.5 375.0L588.8 378.3M588.8 378.3L577.8 396.4M577.8 396.4L600.7 394.7M603.7 295.0L587.6 307.4M603.7 295.0L627.8 315.3M587.6 307.4L627.8 315.3M587.6 307.4L602.9 332.8M587.6 307.4L613.6 329.5M602.9 332.8L613.6 329.5M602.9 332.8L604.1 353.3M613.6 329.5L604.1 353.3M604.1 353.3L613.3 348.5M604.1 353.3L588.8 378.3M613.3 348.5L588.8 378.3M588.8 378.3L600.7 394.7M625.0 371.8L600.7 394.7M600.7 394.7L621.0 397.2M613.1 287.6L627.8 315.3M627.8 315.3L613.6 329.5M613.6 329.5L613.3 348.5M625.0 371.8L621.0 397.2" stroke="#262626" stroke-width="0.8" fill="none"/></g><path d="M475 298L610 295 609 302 508 306 475 310z" fill="#4a4a4a"/><path d="M508 306L609 302" stroke="#9a9a9a" stroke-width="1"/><path d="M510 340L607 322M510 344L607 326M510 372L606 342M530 305v72M548 303v68M565 302v62M578 301v56M598 300v48" stroke="#333" stroke-width="1.1"/><path d="M556 318h5v4h-5zM588 313h5v4h-5zM540 350h5v4h-5zM600 335h4v4h-4z" fill="#222"/><path d="M545 333l55-9v20l-40 20-15 4z" fill="#a0a0a0" opacity=".55"/><path d="M500 307h9v72h-9z" fill="#c8c8c8"/><path d="M500 312h9M500 317h9M500 322h9M500 327h9M500 332h9M500 337h9M500 342h9M500 347h9M500 352h9M500 357h9M500 362h9M500 367h9M500 372h9" stroke="#a4a4a4" stroke-width=".6"/><defs><linearGradient id="pp{uid}" x1="0" y1="0" x2="1" y2="1"><stop offset="0" stop-color="#a8b0bc"/><stop offset=".5" stop-color="#6c7484"/><stop offset="1" stop-color="#4c5260"/></linearGradient></defs><path d="M462 317l38-4v62l-38 9z" fill="url(#pp{uid})"/><path d="M477 338h7v32h-7z" fill="#9a3a78"/><path d="M478 322h6v12h-6z" fill="#303030" opacity=".7"/><circle cx="469" cy="338" r="4.5" fill="none" stroke="#333" stroke-width="1.5" opacity=".7"/><path d="M488 357l6 2-2 9-5-3z" fill="#c09030" opacity=".8"/><path d="M486 318v62" stroke="#555" stroke-width=".8"/><path d="M462 385l40-8v9l-40 13z" fill="#2c2c2c"/><path d="M462 306l40-4v12l-40 4z" fill="#3a3a3a"/><path d="M462 316l40-4" stroke="#777" stroke-width="1"/><path d="M297 322L462 304 462 398 422 407C420 385 405 380 390 380 370 380 356 395 354 430L300 447z" fill="#6c6c6c"/><g clip-path="url(#ccb)"><path d="M298.4 288.5L319.4 302.3M298.4 288.5L292.5 319.1M319.4 302.3L292.5 319.1M292.5 319.1L322.8 318.1M292.5 319.1L294.2 340.0M322.8 318.1L294.2 340.0M294.2 340.0L321.3 348.5M294.2 340.0L317.3 368.1M299.1 359.6L317.3 368.1M299.1 359.6L290.8 393.3M317.3 368.1L290.8 393.3M290.8 393.3L313.9 390.9M290.8 393.3L297.3 416.7M313.9 390.9L297.3 416.7M297.3 416.7L318.0 406.5M318.0 406.5L293.7 441.0M293.7 441.0L297.6 457.5M318.5 444.1L297.6 457.5M297.6 457.5L322.9 463.4M319.4 302.3L343.5 318.5M322.8 318.1L343.5 318.5M322.8 318.1L321.3 348.5M343.5 318.5L321.3 348.5M321.3 348.5L348.2 336.3M321.3 348.5L317.3 368.1M321.3 348.5L346.6 358.9M317.3 368.1L346.6 358.9M317.3 368.1L313.9 390.9M346.6 358.9L313.9 390.9M313.9 390.9L343.8 389.3M313.9 390.9L318.0 406.5M343.8 389.3L318.0 406.5M318.0 406.5L337.1 416.1M318.0 406.5L318.5 444.1M337.1 416.1L318.5 444.1M318.5 444.1L341.9 438.2M318.5 444.1L322.9 463.4M341.9 438.2L322.9 463.4M340.0 299.7L359.1 292.9M340.0 299.7L371.2 314.8M343.5 318.5L371.2 314.8M343.5 318.5L348.2 336.3M343.5 318.5L362.0 349.1M348.2 336.3L362.0 349.1M348.2 336.3L346.6 358.9M362.0 349.1L346.6 358.9M346.6 358.9L370.9 365.3M346.6 358.9L343.8 389.3M346.6 358.9L375.1 386.9M343.8 389.3L375.1 386.9M343.8 389.3L337.1 416.1M375.1 386.9L337.1 416.1M337.1 416.1L371.0 408.3M371.0 408.3L341.9 438.2M341.9 438.2L366.7 441.2M341.9 438.2L349.7 456.0M341.9 438.2L375.5 465.7M349.7 456.0L375.5 465.7M359.1 292.9L391.9 297.3M359.1 292.9L371.2 314.8M359.1 292.9L390.7 313.7M371.2 314.8L362.0 349.1M371.2 314.8L393.9 348.1M362.0 349.1L393.9 348.1M362.0 349.1L370.9 365.3M362.0 349.1L400.3 369.5M370.9 365.3L400.3 369.5M370.9 365.3L375.1 386.9M400.3 369.5L375.1 386.9M375.1 386.9L402.2 386.1M402.2 386.1L371.0 408.3M371.0 408.3L388.0 412.2M371.0 408.3L366.7 441.2M371.0 408.3L389.9 431.9M366.7 441.2L389.9 431.9M366.7 441.2L375.5 465.7M389.9 431.9L375.5 465.7M375.5 465.7L392.4 461.8M391.9 297.3L419.9 293.1M391.9 297.3L390.7 313.7M419.9 293.1L390.7 313.7M390.7 313.7L393.9 348.1M426.2 326.9L393.9 348.1M393.9 348.1L419.1 336.2M393.9 348.1L400.3 369.5M393.9 348.1L411.5 372.0M400.3 369.5L411.5 372.0M400.3 369.5L402.2 386.1M400.3 369.5L411.7 392.9M402.2 386.1L411.7 392.9M402.2 386.1L388.0 412.2M411.7 392.9L388.0 412.2M388.0 412.2L421.3 410.0M388.0 412.2L389.9 431.9M388.0 412.2L425.3 428.9M389.9 431.9L425.3 428.9M389.9 431.9L392.4 461.8M389.9 431.9L413.4 459.1M392.4 461.8L413.4 459.1M419.9 293.1L437.4 301.1M419.9 293.1L426.2 326.9M419.9 293.1L441.2 313.8M426.2 326.9L441.2 313.8M426.2 326.9L419.1 336.2M441.2 313.8L419.1 336.2M419.1 336.2L437.8 344.8M437.8 344.8L411.5 372.0M411.5 372.0L411.7 392.9M445.0 368.2L411.7 392.9M411.7 392.9L448.8 394.4M411.7 392.9L454.3 415.9M421.3 410.0L454.3 415.9M421.3 410.0L440.5 436.0M425.3 428.9L440.2 452.2M413.4 459.1L440.2 452.2M437.4 301.1L471.5 299.3M437.4 301.1L441.2 313.8M437.4 301.1L466.2 315.8M441.2 313.8L466.2 315.8M441.2 313.8L437.8 344.8M466.2 315.8L437.8 344.8M437.8 344.8L469.2 345.9M437.8 344.8L445.0 368.2M469.2 345.9L445.0 368.2M445.0 368.2L472.4 368.0M445.0 368.2L448.8 394.4M472.4 368.0L448.8 394.4M448.8 394.4L477.3 419.3M454.3 415.9L477.3 419.3M454.3 415.9L440.5 436.0M477.3 419.3L440.5 436.0M440.5 436.0L464.5 443.1M440.5 436.0L440.2 452.2M440.5 436.0L476.0 454.0M440.2 452.2L476.0 454.0M471.5 299.3L466.2 315.8M466.2 315.8L469.2 345.9M469.2 345.9L472.4 368.0M472.4 368.0L476.7 387.9M476.7 387.9L477.3 419.3M477.3 419.3L464.5 443.1M464.5 443.1L476.0 454.0" stroke="#1a1a1a" stroke-width="0.9" fill="none"/></g><path d="M253 312L325 305 462 299 475 297 462 306 297 323z" fill="#4e4e4e"/><g clip-path="url(#rfb)"><path d="M252.1 298.6L259.1 295.6M252.1 298.6L252.7 301.9M252.1 298.6L259.6 301.5M252.7 301.9L259.6 301.5M252.7 301.9L247.2 314.6M259.6 301.5L247.2 314.6M247.2 314.6L260.3 314.1M247.2 314.6L249.8 321.7M247.2 314.6L257.0 320.1M249.8 321.7L257.0 320.1M249.8 321.7L248.9 328.2M249.8 321.7L260.5 327.9M248.9 328.2L260.5 327.9M259.1 295.6L266.1 294.2M259.1 295.6L259.6 301.5M266.1 294.2L259.6 301.5M259.6 301.5L268.1 301.5M259.6 301.5L260.3 314.1M268.1 301.5L260.3 314.1M260.3 314.1L270.5 313.8M260.3 314.1L257.0 320.1M270.5 313.8L257.0 320.1M257.0 320.1L269.3 322.2M257.0 320.1L260.5 327.9M269.3 322.2L260.5 327.9M260.5 327.9L268.8 327.9M266.1 294.2L277.6 296.0M266.1 294.2L268.1 301.5M277.6 296.0L268.1 301.5M268.1 301.5L280.0 305.7M268.1 301.5L270.5 313.8M280.0 305.7L270.5 313.8M270.5 313.8L269.3 322.2M275.5 314.4L269.3 322.2M269.3 322.2L278.5 321.8M269.3 322.2L268.8 327.9M269.3 322.2L279.0 327.9M268.8 327.9L279.0 327.9M277.6 296.0L288.5 298.1M277.6 296.0L280.0 305.7M288.5 298.1L280.0 305.7M280.0 305.7L287.2 305.5M280.0 305.7L275.5 314.4M280.0 305.7L287.7 311.7M275.5 314.4L287.7 311.7M275.5 314.4L278.5 321.8M287.7 311.7L278.5 321.8M278.5 321.8L287.4 318.0M278.5 321.8L279.0 327.9M278.5 321.8L285.0 328.2M279.0 327.9L285.0 328.2M288.5 298.1L291.9 295.2M288.5 298.1L287.2 305.5M288.5 298.1L295.9 304.8M287.2 305.5L295.9 304.8M287.2 305.5L287.7 311.7M295.9 304.8L287.7 311.7M287.7 311.7L293.3 314.6M287.7 311.7L287.4 318.0M287.7 311.7L296.0 319.4M287.4 318.0L296.0 319.4M287.4 318.0L285.0 328.2M296.0 319.4L285.0 328.2M285.0 328.2L296.0 328.8M291.9 295.2L304.2 295.4M291.9 295.2L295.9 304.8M291.9 295.2L307.1 304.9M295.9 304.8L307.1 304.9M295.9 304.8L293.3 314.6M295.9 304.8L305.3 313.6M293.3 314.6L305.3 313.6M293.3 314.6L296.0 319.4M293.3 314.6L307.0 317.7M296.0 319.4L307.0 317.7M307.0 317.7L296.0 328.8M296.0 328.8L304.7 329.7M304.2 295.4L311.5 295.5M304.2 295.4L310.2 302.5M307.1 304.9L310.2 302.5M307.1 304.9L305.3 313.6M310.2 302.5L305.3 313.6M305.3 313.6L312.2 310.0M305.3 313.6L307.0 317.7M312.2 310.0L307.0 317.7M307.0 317.7L311.4 322.5M307.0 317.7L304.7 329.7M311.4 322.5L304.7 329.7M304.7 329.7L313.3 328.4M311.5 295.5L324.9 296.4M311.5 295.5L310.2 302.5M311.5 295.5L325.1 304.8M310.2 302.5L325.1 304.8M310.2 302.5L312.2 310.0M325.1 304.8L312.2 310.0M312.2 310.0L324.0 309.9M312.2 310.0L311.4 322.5M312.2 310.0L322.6 321.7M311.4 322.5L322.6 321.7M311.4 322.5L313.3 328.4M322.6 321.7L313.3 328.4M313.3 328.4L319.1 330.7M324.9 296.4L328.9 295.8M324.9 296.4L328.9 304.1M325.1 304.8L328.9 304.1M325.1 304.8L324.0 309.9M328.9 304.1L324.0 309.9M324.0 309.9L331.7 309.8M324.0 309.9L322.6 321.7M331.7 309.8L322.6 321.7M322.6 321.7L333.8 319.9M322.6 321.7L319.1 330.7M322.6 321.7L331.2 328.9M319.1 330.7L331.2 328.9M328.9 295.8L339.2 294.8M328.9 295.8L328.9 304.1M328.9 295.8L341.0 304.4M328.9 304.1L331.7 309.8M341.0 304.4L331.7 309.8M331.7 309.8L338.6 313.4M331.7 309.8L333.8 319.9M331.7 309.8L338.7 317.7M333.8 319.9L331.2 328.9M338.7 317.7L331.2 328.9M331.2 328.9L338.4 325.9M339.2 294.8L346.8 297.4M339.2 294.8L341.0 304.4M339.2 294.8L348.3 306.2M341.0 304.4L348.3 306.2M341.0 304.4L338.6 313.4M341.0 304.4L350.6 309.8M338.6 313.4L350.6 309.8M338.6 313.4L338.7 317.7M338.6 313.4L352.1 322.7M338.7 317.7L352.1 322.7M338.7 317.7L338.4 325.9M352.1 322.7L338.4 325.9M338.4 325.9L346.3 330.6M346.8 297.4L357.6 295.9M346.8 297.4L348.3 306.2M357.6 295.9L348.3 306.2M348.3 306.2L361.0 302.7M348.3 306.2L350.6 309.8M348.3 306.2L358.1 314.6M350.6 309.8L358.1 314.6M350.6 309.8L352.1 322.7M350.6 309.8L359.4 320.1M352.1 322.7L359.4 320.1M352.1 322.7L346.3 330.6M352.1 322.7L361.0 330.1M357.6 295.9L367.7 293.9M357.6 295.9L361.0 302.7M367.7 293.9L361.0 302.7M361.0 302.7L367.8 303.9M361.0 302.7L358.1 314.6M367.8 303.9L358.1 314.6M358.1 314.6L365.1 309.8M358.1 314.6L359.4 320.1M358.1 314.6L367.2 318.3M359.4 320.1L367.2 318.3M359.4 320.1L361.0 330.1M359.4 320.1L366.6 329.3M361.0 330.1L366.6 329.3M367.7 293.9L375.7 294.7M375.7 294.7L367.8 303.9M367.8 303.9L376.5 303.7M367.8 303.9L365.1 309.8M376.5 303.7L365.1 309.8M365.1 309.8L377.8 312.4M365.1 309.8L367.2 318.3M365.1 309.8L379.1 322.7M367.2 318.3L379.1 322.7M367.2 318.3L366.6 329.3M367.2 318.3L377.5 327.0M366.6 329.3L377.5 327.0M375.7 294.7L382.6 298.1M375.7 294.7L376.5 303.7M375.7 294.7L386.8 304.8M376.5 303.7L386.8 304.8M376.5 303.7L377.8 312.4M376.5 303.7L384.1 311.0M377.8 312.4L384.1 311.0M377.8 312.4L379.1 322.7M384.1 311.0L379.1 322.7M379.1 322.7L386.2 320.7M379.1 322.7L377.5 327.0M386.2 320.7L377.5 327.0M377.5 327.0L385.6 329.1M382.6 298.1L395.6 294.3M382.6 298.1L386.8 304.8M382.6 298.1L392.4 306.7M386.8 304.8L392.4 306.7M386.8 304.8L384.1 311.0M386.8 304.8L396.6 314.2M384.1 311.0L396.6 314.2M396.6 314.2L386.2 320.7M386.2 320.7L391.1 317.9M386.2 320.7L385.6 329.1M386.2 320.7L392.6 328.0M385.6 329.1L392.6 328.0M395.6 294.3L403.8 293.9M395.6 294.3L392.4 306.7M395.6 294.3L403.3 301.8M392.4 306.7L403.3 301.8M392.4 306.7L396.6 314.2M403.3 301.8L396.6 314.2M396.6 314.2L400.4 313.2M396.6 314.2L391.1 317.9M396.6 314.2L403.3 321.0M391.1 317.9L403.3 321.0M403.3 321.0L392.6 328.0M392.6 328.0L402.2 328.3M403.8 293.9L410.2 295.2M403.8 293.9L403.3 301.8M410.2 295.2L403.3 301.8M403.3 301.8L400.4 313.2M413.5 305.9L400.4 313.2M400.4 313.2L409.3 310.1M400.4 313.2L403.3 321.0M409.3 310.1L403.3 321.0M403.3 321.0L413.9 321.0M403.3 321.0L402.2 328.3M403.3 321.0L413.7 326.9M402.2 328.3L413.7 326.9M410.2 295.2L420.5 294.7M410.2 295.2L413.5 305.9M410.2 295.2L423.0 303.4M413.5 305.9L409.3 310.1M413.5 305.9L422.0 314.8M409.3 310.1L422.0 314.8M409.3 310.1L419.9 320.6M413.9 321.0L413.7 326.9M419.9 320.6L413.7 326.9M413.7 326.9L422.6 330.7M420.5 294.7L429.5 295.3M429.5 295.3L423.0 303.4M423.0 303.4L427.5 306.1M423.0 303.4L422.0 314.8M423.0 303.4L427.3 309.9M422.0 314.8L427.3 309.9M422.0 314.8L419.9 320.6M427.3 309.9L419.9 320.6M419.9 320.6L430.4 320.2M419.9 320.6L422.6 330.7M430.4 320.2L422.6 330.7M422.6 330.7L431.2 327.3M429.5 295.3L440.7 293.7M429.5 295.3L427.5 306.1M429.5 295.3L437.2 305.0M427.5 306.1L437.2 305.0M437.2 305.0L427.3 309.9M427.3 309.9L436.4 311.1M427.3 309.9L430.4 320.2M436.4 311.1L430.4 320.2M430.4 320.2L440.4 321.3M430.4 320.2L431.2 327.3M440.4 321.3L431.2 327.3M431.2 327.3L437.6 326.5M440.7 293.7L447.1 297.2M440.7 293.7L437.2 305.0M440.7 293.7L447.2 302.0M437.2 305.0L447.2 302.0M437.2 305.0L436.4 311.1M447.2 302.0L436.4 311.1M436.4 311.1L449.3 312.6M436.4 311.1L440.4 321.3M436.4 311.1L450.6 322.7M440.4 321.3L450.6 322.7M440.4 321.3L437.6 326.5M450.6 322.7L437.6 326.5M437.6 326.5L450.6 328.1M447.1 297.2L458.9 294.9M447.1 297.2L447.2 302.0M458.9 294.9L447.2 302.0M447.2 302.0L455.9 303.6M447.2 302.0L449.3 312.6M447.2 302.0L459.7 314.3M449.3 312.6L459.7 314.3M449.3 312.6L450.6 322.7M459.7 314.3L450.6 322.7M450.6 322.7L455.4 319.6M450.6 322.7L450.6 328.1M455.4 319.6L450.6 328.1M450.6 328.1L456.2 327.7M458.9 294.9L455.9 303.6M458.9 294.9L464.1 304.4M455.9 303.6L464.1 304.4M464.1 304.4L459.7 314.3M459.7 314.3L467.9 312.4M459.7 314.3L455.4 319.6M467.9 312.4L455.4 319.6M455.4 319.6L468.1 320.6M455.4 319.6L456.2 327.7M468.1 320.6L456.2 327.7M465.3 295.4L477.4 294.8M465.3 295.4L464.1 304.4M477.4 294.8L464.1 304.4M464.1 304.4L472.0 304.2M464.1 304.4L467.9 312.4M464.1 304.4L475.3 312.6M467.9 312.4L475.3 312.6M467.9 312.4L468.1 320.6M475.3 312.6L468.1 320.6M468.1 320.6L477.9 321.1M468.1 320.6L464.0 329.8M477.9 321.1L464.0 329.8M464.0 329.8L476.9 326.0M477.4 294.8L472.0 304.2M472.0 304.2L475.3 312.6M475.3 312.6L477.9 321.1M477.9 321.1L476.9 326.0" stroke="#222" stroke-width="0.6" fill="none"/></g><path d="M253 312L297 322 462 305" stroke="#a8a8a8" stroke-width="1.2" fill="none"/><path d="M302 323l46-1v34l-45 9z" fill="#2e2e2e"/><path d="M305 326l40-2v30l-40 7z" fill="#8c8c8c"/><path d="M322 326h12v32h-12z" fill="#b4b4b4"/><path d="M306 330l9-1v30h-9z" fill="#6a6a6a"/><path d="M336 325h7v30h-7z" fill="#a0a0a0"/><path d="M376 317l38-3v33l-38 5z" fill="#2e2e2e"/><path d="M378 319l16-1v31l-16 2z" fill="#d4d4d4"/><path d="M384 330l10-2v21l-10 2z" fill="#9a9a9a"/><path d="M396 318l16-2v30l-16 2z" fill="#a4a4a4"/><path d="M422 311l31-3v30l-31 5z" fill="#2e2e2e"/><path d="M424 313l27-3v26l-27 4z" fill="#9c9c9c"/><path d="M430 314h8v24h-8z" fill="#c0c0c0"/><path d="M364 338h10v46h-10z" fill="#151515"/><path d="M355 353h7v34h-7z" fill="#505050"/><path d="M297 323v122" stroke="#b0b0b0" stroke-width="2.5"/><path d="M422 311v96" stroke="#999" stroke-width="1"/></g><g transform="matrix(1.3474,-0.0164,0.0396,0.9625,-83.13,323.08)"><path d="M253 312L297 326 297 445 262 418 247 351z" fill="#3e3e3e"/><path d="M253 312L296 326 287 376 248 351z" fill="#2c2c2c"/><path d="M268 322l25 8-2 22-9-6-16 2z" fill="#d8d8d8"/><path d="M254 316l8 3-3 26-6 3z" fill="#c8c8c8"/><path d="M262 380l26 12v50l-22-26z" fill="#4a4a4a"/><path d="M288 380h10v60h-10z" fill="#888" opacity=".6"/><path d="M289 382h4v6h-4zM293 390h4v6h-4zM289 398h4v6h-4zM293 406h4v6h-4zM289 420h4v6h-4zM293 428h4v6h-4z" fill="#000"/><path d="M228 405L246 400 296 430 300 447 263 463 236 436z" fill="#4a4a4a"/><path d="M228 405L236 436 263 463 260 450 240 428z" fill="#6e6e6e"/><path d="M240 413l16 2 34 22-20 8-20-18z" fill="#1e1e1e"/><path d="M256 440l40-4v10l-33 17z" fill="#4a4a4a"/><path d="M260 452l12-3 2 10-10 4z" fill="#9a9a9a"/><rect x="281" y="445" width="13" height="7" fill="#a08438"/><circle cx="267" cy="421" r="3.5" fill="#999"/><path d="M234 350l6 45 10 28M232 392l4 20" stroke="#555" stroke-width="1" fill="none"/></g><g transform="matrix(0.8023,-0.0318,0.0262,0.9205,84.52,343.10)"><path d="M350 436c2-32 20-54 40-54 22 0 36 18 36 32l-5 2c-2-14-14-26-31-26-20 0-32 18-33 48z" fill="#303030"/><path d="M350 436c1-20 8-34 18-44l3 2c-9 10-15 24-16 42z" fill="#c8c8c8"/><path d="M420 408c0-8-6-20-14-24 8 2 18 12 18 22z" fill="#3a3a3a"/><ellipse cx="387" cy="417" rx="29" ry="32" fill="#1a1a1a"/><ellipse cx="389" cy="418" rx="18" ry="20" fill="#b81414"/><ellipse cx="389" cy="418" rx="12" ry="14" fill="none" stroke="#3a0606" stroke-width="2.6" stroke-dasharray="2.2 2.2"/><ellipse cx="389" cy="418" rx="16.5" ry="18.5" fill="none" stroke="#ff6060" stroke-width=".8" opacity=".5"/><circle cx="390" cy="419" r="6" fill="#2a2a2a"/><path d="M378 402c6-6 18-4 22 6" stroke="#ff8080" stroke-width="1.2" fill="none" opacity=".6"/><ellipse cx="555" cy="359" rx="16.5" ry="20" fill="#1a1a1a"/><ellipse cx="558.5" cy="360" rx="8" ry="13" fill="#b81414"/><ellipse cx="558.5" cy="360" rx="5" ry="9" fill="#5a0a0a"/><circle cx="559" cy="360" r="2.5" fill="#222"/><ellipse cx="580" cy="351.5" rx="12.5" ry="18" fill="#1a1a1a"/><ellipse cx="583" cy="352" rx="7" ry="12" fill="#b81414"/><ellipse cx="583" cy="352" rx="4.2" ry="8.2" fill="#5a0a0a"/><circle cx="583.5" cy="352" r="2.2" fill="#222"/></g><g><path d="M211 559L370 563.5 542.5 569.4 550 578 557 589.6 557 594 470 601.8 370 606.8 267 613 245 612.5C228 610 212 605 200 598 188 592 182 586 182 579 182 568 195 561 211 559z" fill="#000"/><path d="M205 564C193 568 187 574 188 582 189 590 196 597 206 601L208 599C199 595 193 589 193 582 193 575 198 569 207 566z" fill="#e3e3e3"/><path d="M211 565L215 565 245 601 230 602.5C222 602 214 599 207 594 202 589 200 584 200 579 200 572 204 567 211 565z" fill="#e3e3e3"/><path d="M219 565L244 600" stroke="#e6e6e6" stroke-width="3.5"/><path d="M230 566L253 600" stroke="#e6e6e6" stroke-width="1.2"/><path d="M237 567L257 600" stroke="#e6e6e6" stroke-width="2.4"/><path d="M249 568L268 600" stroke="#e6e6e6" stroke-width="2.2"/><path d="M263 568L282 600" stroke="#e6e6e6" stroke-width="2.2"/><path d="M274 569L292 600" stroke="#e6e6e6" stroke-width="2.2"/><path d="M284 569L302 600" stroke="#e6e6e6" stroke-width="1.6"/><path d="M295 570L310 598" stroke="#e6e6e6" stroke-width="1"/><path d="M334 572L346 596" stroke="#e6e6e6" stroke-width="1"/><path d="M341 572L357 598" stroke="#e6e6e6" stroke-width="1.6"/><path d="M352 572L364 596" stroke="#e6e6e6" stroke-width="1.2"/><path d="M400 572L412 592" stroke="#e6e6e6" stroke-width="0.9"/><path d="M404 572L416 594" stroke="#e6e6e6" stroke-width="0.9"/><path d="M435 574L443 592" stroke="#e6e6e6" stroke-width="0.8"/><path d="M470 575L478 592" stroke="#e6e6e6" stroke-width="0.7"/><path d="M524 572l7 12M529 572l7 12M534 573l7 12M539 574l6 10M545 580l4 8" stroke="#c8c8c8" stroke-width=".9"/><path d="M557 575h23v22h-23z" fill="#d8d8d8" opacity=".7"/><path d="M560 577l3 19M567 576l1 21M574 577l3 19" stroke="#999" stroke-width=".8"/><path d="M466 585h9v19l-4.5 8-4.5-8z" fill="#d4d4d4"/><path d="M455 603l30-2-10 7z" fill="#c8c8c8"/></g><g transform="matrix(0.8023,-0.0318,0.0262,0.9205,84.52,343.10)"><g fill="#0020ff"><rect x="265" y="339" width="3" height="3"/><rect x="324" y="340" width="3" height="3"/><rect x="386" y="331" width="3" height="2"/><rect x="405" y="328" width="3" height="2"/><rect x="437" y="323" width="3" height="2"/><rect x="250" y="372" width="2" height="3"/><rect x="252" y="386" width="2" height="3"/><rect x="262" y="407" width="2" height="2"/><rect x="269" y="415" width="2" height="2"/></g><g fill="#00c000"><rect x="297" y="389" width="3" height="3"/><rect x="422" y="360" width="2" height="2"/></g></g></g></svg>
<svg style="left:150px;top:737px;" width="40" height="42" viewBox="0 0 40 42"><path d="M6.5 8v25.5" stroke="#005000"/><path d="M6.5 33.5l14-5" stroke="#888"/><path d="M6.5 33.5l14 5" stroke="#900"/><text x="3" y="9" font-family="Liberation Mono" font-weight="bold" font-size="10" fill="#008000">y</text><text x="20" y="32" font-family="Liberation Mono" font-weight="bold" font-size="10" fill="#00f">z</text><text x="20" y="41" font-family="Liberation Mono" font-weight="bold" font-size="10" fill="#f00">x</text></svg>
<svg style="left:766px;top:213px;" width="583" height="278" viewBox="0 0 583 278"><g transform="translate(-766,-213)"><path d="M962.1 213.0L962.9 421.0M972.1 213.0L972.6 421.0M996.9 213.0L997.7 421.0M1004.9 213.0L1004.0 421.0M983.5 395.0L1017.0 395.6M1115.5 213.0L1114.5 421.0M1125.1 213.0L1125.9 421.0M1148.8 213.0L1148.2 421.0M1156.5 213.0L1155.9 421.0M1136.0 262.0L1168.0 261.3M1136.0 330.0L1168.0 329.1M1136.0 395.0L1168.0 395.2" stroke="#909090" stroke-width="1" fill="none" shape-rendering="crispEdges"/><path d="M954.0 213.0L954.3 421.0M983.5 213.0L984.0 421.0M1012.3 213.0L1012.9 421.0M959.4 286.0L989.1 213.0M963.0 286.0L988.2 213.0M993.2 213.0L996.1 286.0M955.0 421.0L981.0 290.0M961.5 421.0L970.4 290.0M996.0 290.0L991.0 421.0M1107.8 213.0L1107.1 421.0M1136.0 213.0L1136.2 421.0M1163.5 213.0L1162.8 421.0M1122.9 286.0L1140.0 213.0M1109.6 286.0L1141.7 213.0M1156.2 213.0L1153.4 286.0M1107.9 421.0L1141.3 290.0M1117.3 421.0L1141.8 290.0M1165.3 290.0L1143.6 421.0M1031 216.0H1089M1031 219.5H1089M1031 224.7H1089M1031 229.0H1089M1031 233.3H1089M1031 238.9H1089M1031 243.6H1089M1031 247.9H1089M1031 252.6H1089M1031 257.8H1089M1031 261.5H1089M1031 267.4H1089M1031 271.0H1089M1031 276.3H1089M1031 281.9H1089M1031 285.5H1089M1031 291.0H1089M1031 295.4H1089M1031 300.3H1089M1031 303.8H1089M1031 307.5H1089M1031 311.4H1089M1031 317.3H1089M1031 321.3H1089M1031 326.7H1089M1031 332.5H1089M1031 338.4H1089M1031 342.7H1089M1031 347.1H1089M1031 351.9H1089M1031 357.4H1089M1031 361.1H1089M1031 366.5H1089M1031 372.0H1089M1031 377.6H1089M1031 381.2H1089M1031 387.1H1089M1031 390.8H1089M1031 395.2H1089M1031 400.2H1089M1031 406.0H1089M1031 410.4H1089M1031 416.2H1089M1031 421.0H1089M1031 425.3H1089M1031 429.6H1089M1031 433.5H1089M1031 437.2H1089M1031 441.1H1089M1031 446.3H1089M1031 452.3H1089M1031 456.2H1089M1031 459.9H1089M1031 465.8H1089M1031 470.7H1089M1031 475.2H1089M1031 479.3H1089M1031 484.2H1089M1031 489.8H1089M1051.0 213.0L1051.0 490.0M1054.0 213.0L1054.0 490.0M1058.0 213.0L1058.0 490.0M1062.0 213.0L1062.0 490.0M1066.0 213.0L1066.0 490.0M1040.0 213.0L1040.0 490.0M1078.0 213.0L1078.0 490.0M1055.5 227.9L1084.1 222.1M1059.6 436.9L1038.6 415.7M1086.1 381.3L1076.7 242.5M1056.2 252.8L1080.0 294.7M1057.3 479.8L1080.4 483.4M1057.3 343.3L1073.3 345.7M1047.9 320.8L1039.5 317.4M1088.3 469.3L1067.4 351.3" stroke="#000" stroke-width="1" fill="none" shape-rendering="crispEdges"/><path d="M1031 218.0H1089M1031 226.4H1089M1031 233.7H1089M1031 241.8H1089M1031 251.9H1089M1031 262.4H1089M1031 270.8H1089M1031 281.0H1089M1031 291.1H1089M1031 300.9H1089M1031 310.5H1089M1031 320.6H1089M1031 329.0H1089M1031 338.8H1089M1031 347.0H1089M1031 355.9H1089M1031 366.0H1089M1031 375.7H1089M1031 383.9H1089M1031 394.7H1089M1031 404.3H1089M1031 413.6H1089M1031 420.7H1089M1031 429.9H1089M1031 437.9H1089M1031 447.5H1089M1031 456.4H1089M1031 466.7H1089M1031 476.3H1089M1031 486.4H1089" stroke="#000" stroke-width="2.2" fill="none"/><path d="M953.0 425.0L953.0 490.0M958.0 425.0L958.0 490.0M966.0 425.0L966.0 490.0M975.0 425.0L975.0 490.0M985.0 425.0L985.0 490.0M995.0 425.0L995.0 490.0M1005.0 425.0L1005.0 490.0M1012.0 425.0L1012.0 490.0M1108.0 425.0L1108.0 490.0M1116.0 425.0L1116.0 490.0M1125.0 425.0L1125.0 490.0M1135.0 425.0L1135.0 490.0M1145.0 425.0L1145.0 490.0M1155.0 425.0L1155.0 490.0M1162.0 425.0L1162.0 490.0M1090.4 427.7L1111.8 485.3M1139.6 439.5L1156.6 488.7M1132.4 430.1L1168.0 480.7M1106.9 424.3L1127.6 483.4M1086.0 434.7L1110.7 460.8M984.9 433.4L979.6 466.6M979.1 424.4L962.7 465.8M957.8 428.2L954.7 478.4M1078.7 421.0L1055.1 472.2M1010.7 423.2L1002.6 484.9M1031.5 422.8L989.8 476.4M1024.0 436.6L1031.3 472.6M1127.2 428.0L1140.0 464.3M1079.9 439.4L1085.7 478.3M973.5 432.7L979.4 464.2M1162.0 439.3L1151.2 487.4M1079.9 430.4L1058.3 472.5M1012.4 423.3L1010.4 478.7M1046.7 436.7L1028.1 460.4M1066.1 435.9L1045.7 467.4M1008.4 439.8L977.3 468.8M1082.6 432.5L1080.3 482.3M975.8 426.7L999.2 476.0M1023.3 429.8L1005.0 470.8M1112.4 421.7L1120.6 467.6M1049.3 431.4L1086.8 460.4M1119.7 431.9L1113.2 481.2M1087.8 428.3L1086.2 471.8M1135.7 426.6L1108.4 484.9M964.4 434.2L994.7 473.0M1012.4 438.3L1037.7 464.3M1022.1 436.4L990.9 462.1M1000.1 436.0L1028.9 479.9M955.6 439.6L975.6 490.0M1102.9 425.2L1062.3 479.4M1157.6 423.6L1168.0 468.8M1150.1 432.6L1118.6 472.4M985.1 421.8L996.2 463.2M1075.4 423.6L1097.2 473.0M1154.6 422.1L1143.3 480.9M982.9 430.6L994.8 487.3M1070.3 430.8L1048.1 464.0M1001.1 435.0L989.5 465.4M1105.5 422.6L1119.4 480.0M969.9 432.3L950.0 467.2M1141.2 427.1L1139.4 483.9M956.4 422.0L976.7 464.5M1157.5 425.2L1168.0 463.5M1162.0 436.6L1168.0 464.2M1034.1 433.3L1001.4 484.1M1044.5 432.3L1076.1 477.2M1111.4 422.8L1102.0 461.0M994.1 437.9L952.7 474.4M1115.8 429.9L1070.8 486.7M971.7 424.0L950.0 471.2M950.0 428.0L1168.0 428.0M950.0 433.0L1168.0 433.0M950.0 440.0L1168.0 440.0M950.0 452.0L1168.0 452.0M950.0 470.0L1168.0 470.0M950.0 480.0L1168.0 480.0M950.0 486.0L1168.0 486.0" stroke="#000" stroke-width="1" fill="none" shape-rendering="crispEdges"/><path d="M950.5 213V490M1167.5 213V490" stroke="#000" stroke-width="2.2"/><rect x="1017" y="213" width="14" height="278" fill="#000"/><rect x="1089" y="213" width="16" height="278" fill="#000"/><path d="M950 286H1168M950 421H1168" stroke="#000" stroke-width="3"/><path d="M950 290H1017M1104 290H1168" stroke="#000" stroke-width="1.2"/><path d="M1105 222L1148 289" stroke="#000" stroke-width="2"/><path d="M955 425Q950 425 950 432M1163 425Q1168 425 1168 432" stroke="#000" stroke-width="2" fill="none"/><path d="M958 336c3-4 8-4 11 0v10c-3 4-8 4-11 0zM958 349c3-4 8-4 11 0v10c-3 4-8 4-11 0z" stroke="#000" stroke-width="2" fill="none"/><path d="M961 362h8v56h-8z" fill="none" stroke="#000" stroke-width="1.5"/><circle cx="965" cy="377" r="4" fill="#000"/><circle cx="966" cy="390" r="4" fill="#000"/><circle cx="964" cy="403" r="3.5" fill="#000"/><circle cx="963" cy="412" r="3" fill="#000"/><path d="M944 440h6M1168 440h6" stroke="#000" stroke-width="3"/><path d="M1015 330h6v30h-6zM1100 330h6v30h-6z" fill="none" stroke="#000" stroke-width="1"/><path d="M1057.5 318V352" stroke="#00f" stroke-width="1.2"/><path d="M1058 352h22" stroke="#d00" stroke-width="1"/><path d="M1120 468h25M1168 489h22M962 489h18" stroke="#e04040" stroke-width="1"/><path d="M1035 441v28M1124 441v28" stroke="#00f" stroke-width="1"/></g></svg>
<svg style="left:770px;top:450px;" width="40" height="40" viewBox="0 0 40 40"><path d="M4.5 6v28M4 33.5h25" stroke-width="1.2"/><path d="M4.5 6v28" stroke="#00008a"/><path d="M4 33.5h25" stroke="#600"/><text x="1" y="8" font-family="Liberation Mono" font-weight="bold" font-size="10" fill="#00f">z</text><text x="1" y="40" font-family="Liberation Mono" font-weight="bold" font-size="10" fill="#008000">y</text><text x="31" y="39" font-family="Liberation Mono" font-weight="bold" font-size="10" fill="#f00">x</text></svg>
<svg style="left:766px;top:523px;" width="583" height="258" viewBox="0 0 583 258"><g transform="translate(-766,-523)"><rect x="1025" y="622" width="68" height="78" fill="#000"/><path d="M951.2 524.1L950.7 637.4M953.7 524.5L954.2 639.8M959.2 524.8L958.7 638.9M965.6 524.4L965.9 639.5M969.4 523.3L969.4 637.2M975.2 525.3L975.0 637.8M978.2 523.9L978.4 637.8M983.0 523.3L982.8 639.4M987.1 525.4L986.7 637.3M994.4 523.2L994.3 638.5M997.1 524.3L997.5 639.7M1002.8 523.4L1002.9 637.3M1006.5 523.0L1006.0 638.4M1009.1 523.3L1009.0 637.2M1013.9 524.2L1014.0 639.7M1019.6 523.5L1019.7 637.1M1022.4 524.7L1022.5 639.6M1026.3 526.0L1026.9 639.6M1032.7 525.9L1032.4 638.2M1035.4 524.1L1035.7 638.2M1042.2 523.3L1042.0 637.4M1047.9 524.4L1047.8 637.0M1053.6 523.1L1053.9 639.0M1058.5 523.6L1058.4 639.0M1061.4 524.9L1061.0 637.6M1064.1 525.3L1064.5 638.5M1070.5 523.7L1070.8 638.7M1074.3 525.9L1074.1 638.9M1081.5 524.1L1081.7 639.5M1088.6 523.8L1088.1 637.1M1092.1 525.8L1092.7 638.2M1094.6 523.2L1094.3 638.8M1100.5 525.9L1100.3 639.6M1106.1 523.4L1105.6 638.3M1112.4 523.2L1112.4 637.9M1119.1 524.1L1119.6 639.5M1125.6 525.3L1126.0 638.5M1128.6 523.1L1128.6 639.5M1134.6 523.3L1134.9 639.3M1137.1 523.5L1137.1 638.3M1141.8 523.5L1141.8 637.2M1147.2 525.8L1146.7 637.0M1154.6 524.6L1154.6 638.4M1162.1 523.2L1162.3 638.4M1166.3 525.2L1166.5 639.7M952.0 523.6L1164.5 523.1M951.5 525.6L1163.5 525.3M952.9 527.9L1164.5 528.4M952.4 529.2L1164.5 529.5M950.3 531.0L1166.2 531.2M950.3 532.5L1165.6 532.5M950.1 534.5L1163.9 534.3M950.0 536.7L1163.2 536.8M953.9 539.2L1163.7 538.7M950.9 540.9L1163.9 540.6M950.4 542.5L1166.5 543.0M951.5 545.0L1164.0 544.9M952.5 546.1L1166.1 545.8M950.8 552.2L1165.2 552.7M950.4 555.3L1163.8 554.8M953.4 559.9L1164.6 559.5M951.1 563.2L1165.8 563.6M953.1 572.1L1163.4 572.6M953.7 580.3L1163.1 579.8M951.0 585.2L1164.6 585.2M953.3 590.3L1165.4 590.0M951.8 595.0L1164.6 595.0M950.7 600.6L1165.4 600.4M952.2 604.6L1166.2 604.9M950.6 611.6L1164.5 611.4M952.4 617.3L1164.0 617.7M950.8 624.7L1164.8 624.5M952.2 627.8L1165.1 628.2M953.3 632.7L1164.9 632.2M952.2 545.0L964.4 556.0M964.0 545.0L951.8 556.0M961.3 545.0L971.7 556.0M977.5 545.0L967.1 556.0M971.8 545.0L989.4 556.0M994.9 545.0L977.3 556.0M990.1 545.0L1001.2 556.0M1005.2 545.0L994.1 556.0M1005.1 545.0L1015.7 556.0M1011.8 545.0L1001.2 556.0M1014.7 545.0L1032.8 556.0M1031.1 545.0L1012.9 556.0M1034.3 545.0L1047.4 556.0M1042.7 545.0L1029.6 556.0M1042.9 545.0L1056.9 556.0M1061.3 545.0L1047.3 556.0M1058.3 545.0L1073.9 556.0M1075.6 545.0L1060.0 556.0M1073.6 545.0L1085.7 556.0M1087.9 545.0L1075.8 556.0M1084.9 545.0L1097.9 556.0M1101.7 545.0L1088.7 556.0M1102.0 545.0L1117.0 556.0M1112.6 545.0L1097.6 556.0M1111.8 545.0L1126.4 556.0M1132.3 545.0L1117.7 556.0M1126.5 545.0L1142.0 556.0M1147.8 545.0L1132.2 556.0M1147.1 545.0L1160.9 556.0M1156.5 545.0L1142.7 556.0M1161.2 545.0L1167.4 556.0M1162.6 545.0L1156.3 556.0M950.6 558.0L976.0 596.0M978.7 558.0L953.4 596.0M949.9 558.0L975.2 596.0M979.5 558.0L954.1 596.0M978.4 558.0L999.8 596.0M997.6 558.0L976.3 596.0M975.8 558.0L997.1 596.0M1000.3 558.0L979.0 596.0M1000.2 558.0L1020.0 596.0M1017.0 558.0L997.2 596.0M997.8 558.0L1017.6 596.0M1019.4 558.0L999.6 596.0M1018.8 558.0L1042.1 596.0M1041.5 558.0L1018.2 596.0M1021.1 558.0L1044.4 596.0M1039.2 558.0L1015.9 596.0M1039.9 558.0L1055.7 596.0M1059.5 558.0L1043.7 596.0M1043.5 558.0L1059.2 596.0M1055.9 558.0L1040.2 596.0M1055.1 558.0L1079.4 596.0M1084.2 558.0L1060.0 596.0M1055.4 558.0L1079.6 596.0M1084.0 558.0L1059.8 596.0M1082.1 558.0L1100.2 596.0M1099.7 558.0L1081.5 596.0M1084.2 558.0L1102.4 596.0M1097.6 558.0L1079.4 596.0M1098.2 558.0L1116.5 596.0M1120.0 558.0L1101.8 596.0M1101.1 558.0L1119.4 596.0M1117.1 558.0L1098.9 596.0M1120.3 558.0L1141.3 596.0M1137.1 558.0L1116.2 596.0M1121.2 558.0L1142.2 596.0M1136.2 558.0L1115.2 596.0M1140.5 558.0L1166.3 596.0M1163.7 558.0L1137.9 596.0M1139.2 558.0L1165.0 596.0M1165.0 558.0L1139.2 596.0M953.8 603.0L965.6 618.0M961.9 603.0L950.2 618.0M963.6 603.0L978.6 618.0M979.0 603.0L964.0 618.0M981.6 603.0L998.9 618.0M993.3 603.0L976.0 618.0M998.6 603.0L1015.1 618.0M1010.1 603.0L993.6 618.0M1010.1 603.0L1030.6 618.0M1035.6 603.0L1015.1 618.0M1035.4 603.0L1050.0 618.0M1045.3 603.0L1030.7 618.0M1050.5 603.0L1069.1 618.0M1063.4 603.0L1044.9 618.0M1066.4 603.0L1079.4 618.0M1079.0 603.0L1066.1 618.0M1079.5 603.0L1099.6 618.0M1099.1 603.0L1079.0 618.0M1102.2 603.0L1119.9 618.0M1114.2 603.0L1096.5 618.0M1114.4 603.0L1127.2 618.0M1132.5 603.0L1119.7 618.0M1130.4 603.0L1149.8 618.0M1148.8 603.0L1129.4 618.0M1151.3 603.0L1164.4 618.0M1160.4 603.0L1147.3 618.0M1160.2 603.0L1162.8 618.0M1167.2 603.0L1164.6 618.0M950.1 603.5L1165.4 603.8M953.9 605.7L1166.8 605.3M952.3 607.5L1166.2 607.7M952.3 609.8L1163.6 610.2M950.6 612.7L1165.5 613.3M951.1 614.9L1165.1 614.5M952.5 617.7L1166.6 618.2M951.0 620.0L1164.5 620.5M950.1 622.1L1166.2 621.6M951.2 624.4L1163.6 624.1M951.9 626.1L1166.5 625.8M950.7 628.0L1164.5 628.5M952.6 630.1L1165.7 630.6M950.1 632.5L1164.0 632.1M950.1 634.1L1163.6 634.4M952.2 636.2L1164.2 635.7M952.8 638.8L1163.2 638.3M1059.2 608.5L1051.0 615.0M1138.9 571.2L1139.8 586.9M962.0 618.1L952.0 616.3M1014.0 604.8L1015.9 614.7M976.3 611.0L995.5 618.2M1000.7 564.5L997.8 547.1M1150.5 575.6L1165.0 562.9M1087.9 604.9L1096.5 601.8M958.9 577.7L952.3 595.5M1154.6 616.8L1165.0 603.5M961.1 566.9L952.0 551.7M1073.3 560.1L1080.0 555.3M1011.2 617.7L992.4 633.0M1063.0 594.7L1041.6 604.5M1137.4 559.9L1135.7 566.0M1052.3 601.4L1061.0 594.0M1094.6 603.0L1092.4 606.6M1085.1 580.8L1060.4 577.1M1114.5 599.3L1088.9 598.4M1075.5 585.0L1054.5 590.8M1098.0 585.2L1124.3 588.3M957.5 566.4L969.6 549.6M1152.8 597.4L1165.0 584.2M956.4 610.5L957.0 608.2M1061.3 602.6L1053.6 613.5M946.2 642.9L946.5 711.0M948.5 642.6L948.3 709.9M951.5 642.9L951.2 709.6M954.0 642.4L953.5 710.8M956.2 642.4L956.2 711.9M958.0 642.5L958.5 710.3M959.6 642.3L960.0 711.1M961.8 640.9L961.3 709.8M963.5 640.3L964.0 711.7M966.3 642.4L966.0 710.9M968.1 642.1L968.6 709.8M970.4 641.6L970.3 709.9M972.2 640.7L972.5 711.2M975.4 642.2L975.0 711.9M977.9 640.4L977.9 710.2M980.8 641.2L980.8 709.6M982.4 641.0L982.8 710.9M985.5 640.3L985.0 710.9M987.7 641.1L987.4 710.7M990.7 642.8L990.9 711.2M993.2 640.5L992.6 709.6M995.0 640.5L995.4 711.6M996.9 640.5L997.3 710.0M998.6 640.2L999.1 711.6M1001.3 642.1L1001.4 710.6M1003.4 640.8L1003.6 711.5M1005.7 640.8L1005.5 709.3M1008.1 641.9L1008.3 712.0M1010.9 642.6L1011.2 710.4M1013.8 642.8L1013.6 711.5M1015.9 640.1L1015.5 711.8M1017.3 641.2L1016.7 710.6M1020.2 642.1L1019.7 709.8M1021.9 642.4L1022.1 710.4M1024.1 642.9L1023.8 709.3M1025.9 640.3L1025.6 711.9M1028.8 640.6L1028.9 711.2M1030.8 642.4L1030.9 711.2M1033.6 640.4L1033.0 709.9M1036.5 642.3L1036.7 709.2M1039.6 641.7L1039.2 710.3M1041.7 642.1L1041.6 711.8M1043.5 640.4L1043.8 709.9M1045.9 641.0L1046.1 710.7M1048.1 640.6L1048.7 710.7M1050.4 640.6L1050.3 710.6M1052.6 642.2L1052.4 710.1M1055.2 640.4L1055.6 711.8M1057.0 642.5L1056.6 711.2M1059.2 642.8L1059.7 711.3M1061.7 642.5L1061.7 711.1M1063.4 640.2L1062.9 711.9M1066.1 641.8L1065.6 709.2M1069.3 641.2L1069.1 709.4M1071.9 642.2L1071.5 709.8M1074.1 640.2L1073.5 711.2M1075.9 640.8L1076.4 710.8M1077.7 640.3L1077.1 710.8M1079.8 640.2L1079.8 711.0M1081.3 641.4L1080.8 711.5M1084.0 641.3L1083.8 710.3M1086.7 641.9L1087.3 709.9M1088.7 642.9L1088.2 711.4M1090.4 641.1L1090.2 710.8M1092.9 641.0L1092.9 710.0M1096.0 642.9L1095.8 710.8M1099.2 642.5L1099.6 711.7M1101.1 641.3L1100.8 710.6M1104.2 641.2L1104.2 711.0M1106.6 641.6L1106.3 711.8M1109.4 642.5L1109.2 711.4M1111.0 641.9L1111.1 709.2M1113.6 641.7L1113.7 709.3M1116.6 640.5L1116.2 711.6M1118.1 642.6L1118.6 710.5M1120.8 642.0L1121.0 710.8M1124.0 640.9L1123.5 711.8M1126.8 642.3L1127.2 709.6M1128.6 641.1L1128.3 709.4M1130.0 640.9L1130.2 710.1M1131.4 640.3L1131.0 711.3M1133.7 640.1L1134.1 710.6M1136.3 641.1L1136.7 711.7M1139.3 640.7L1139.3 710.3M1141.9 641.6L1142.1 711.8M1144.2 641.5L1144.4 711.7M1146.9 640.2L1146.4 711.8M1150.1 640.5L1150.3 711.8M1152.5 640.7L1152.7 709.8M1155.2 641.6L1155.4 712.0M1156.7 640.7L1156.6 709.7M1158.1 640.6L1158.1 711.0M1159.7 640.8L1159.1 712.0M1162.6 640.9L1162.8 711.3M1165.3 642.6L1164.7 710.2M1168.3 642.3L1167.9 709.8M948.6 640.2L1168.5 639.8M949.4 642.6L1170.7 642.5M946.0 644.6L1168.9 645.2M948.0 646.4L1167.3 646.8M946.4 648.9L1167.0 648.7M946.7 650.7L1167.8 650.8M948.0 652.6L1168.9 652.7M948.9 654.1L1170.0 653.5M946.4 656.6L1167.8 656.9M948.4 658.5L1170.0 658.1M949.0 660.9L1167.9 660.9M949.1 662.3L1167.2 662.0M946.6 664.4L1167.2 664.6M948.8 665.8L1168.3 665.7M949.7 667.8L1168.3 667.8M948.6 670.4L1167.9 670.4M949.1 672.7L1169.0 672.6M948.6 674.2L1168.1 674.1M948.8 675.6L1168.4 675.8M949.5 677.1L1168.1 677.5M947.1 678.6L1168.9 678.0M946.7 681.2L1170.4 681.5M948.3 682.8L1168.4 682.4M948.8 684.1L1167.5 684.5M947.3 685.6L1169.2 685.0M949.3 688.0L1167.1 688.5M947.2 690.4L1168.4 690.9M946.3 691.7L1167.1 691.2M947.5 694.2L1170.0 694.1M948.6 696.6L1170.5 697.0M949.3 698.4L1169.0 698.8M947.4 700.4L1167.0 701.0M948.1 702.4L1168.6 702.6M949.7 704.1L1169.3 704.7M949.7 706.1L1167.3 705.9M948.3 707.5L1168.7 707.3M947.1 709.2L1170.6 709.2M947.7 711.2L1167.6 711.1M1114.5 677.9L1112.7 671.5M1099.6 701.4L1123.1 708.6M1161.2 682.9L1158.8 694.5M1096.4 649.6L1114.1 651.9M1136.6 671.4L1143.1 673.7M1083.9 702.3L1078.7 706.5M1154.9 650.8L1170.0 655.3M1046.0 647.5L1045.7 640.0M992.5 677.8L998.8 688.2M1087.5 694.9L1089.8 683.5M1021.8 652.7L1027.1 648.0M1083.1 666.9L1060.4 660.4M1153.4 674.2L1161.5 675.2M1050.6 689.4L1070.9 692.5M1121.9 667.7L1110.7 656.0M1066.4 649.1L1054.8 648.2M1031.3 658.5L1027.4 668.6M1072.5 688.0L1097.5 691.4M1157.4 690.2L1170.0 692.8M1167.8 680.7L1159.7 684.4M970.4 672.6L992.5 664.1M1039.1 664.7L1045.0 673.2M1020.0 682.0L996.5 675.7M1041.5 686.6L1060.4 695.9M1060.9 661.9L1077.1 670.3M1122.8 688.4L1129.3 685.8M1074.5 668.9L1084.8 678.0M1016.0 692.8L996.1 682.9M991.2 663.9L987.9 661.2M1147.4 648.5L1165.7 642.3M1015.7 675.4L1012.9 677.1M957.1 683.6L946.0 675.5M1011.4 678.3L1022.9 667.1M956.6 671.8L946.0 677.0M1127.3 703.8L1151.6 712.0M1002.2 681.8L983.7 682.9M1102.6 686.1L1126.7 683.1M1042.5 703.6L1057.4 696.0M1036.1 695.3L1014.1 702.9M1145.0 687.1L1126.0 688.4M983.6 702.8L971.1 692.0M1048.3 660.4L1066.4 652.7M976.1 669.3L973.1 670.3M1159.7 670.9L1170.0 662.0M1055.0 702.9L1071.7 706.3M969.2 709.9L962.2 712.0M971.7 651.4L967.4 658.4M1114.7 670.1L1102.5 671.9M1046.8 661.2L1028.2 650.5M969.2 695.5L992.0 702.8M1096.1 674.0L1084.9 673.5M1037.6 699.0L1060.7 696.7M1010.2 692.4L1031.3 703.7M1163.6 696.6L1170.0 696.0M1101.2 658.9L1126.0 652.6M1116.9 696.1L1135.8 693.0M1056.1 646.1L1075.0 648.0M980.8 667.1L975.2 666.5M1016.5 662.3L1017.6 668.4M1052.5 674.0L1046.7 684.5M1115.8 689.9L1093.8 696.2M1044.5 690.1L1043.0 680.1M1069.1 692.3L1052.6 695.0M1008.8 645.7L986.1 643.1M1004.0 656.5L995.5 663.4M1061.9 682.3L1082.1 676.0M1144.8 689.0L1155.8 699.1M984.7 671.1L986.6 671.8M1165.0 660.4L1153.5 667.0M1123.0 665.9L1100.6 665.9M1072.5 700.8L1076.2 701.8M1120.2 688.1L1126.5 676.5M1104.1 673.6L1106.3 674.6M1120.3 655.6L1139.0 647.0M1128.9 699.9L1105.7 701.2M1129.1 665.5L1111.8 676.1M998.1 709.6L990.1 712.0M1071.2 650.0L1057.8 652.7M952.4 659.9L946.0 650.4M1155.7 678.7L1148.9 675.5M974.0 684.2L982.4 690.1M1138.1 701.2L1131.7 694.7M970.0 690.1L977.1 680.8M1107.0 702.6L1083.4 705.7M1119.8 693.1L1108.5 690.1M968.4 659.4L972.4 668.8M1024.4 688.2L1046.2 693.3M996.8 666.6L1018.5 655.0M1057.4 668.7L1041.2 670.2M1018.4 662.9L1034.7 667.7M1143.4 645.3L1158.7 644.6M1059.7 704.8L1060.8 712.0M1122.8 649.6L1141.2 645.0M1067.4 678.1L1073.8 667.7M1064.0 688.3L1053.3 695.2M1062.1 674.5L1046.4 666.4M1027.4 676.2L1049.0 680.7M985.3 660.4L1006.2 649.2M1153.1 697.3L1170.0 689.8M1134.4 676.6L1131.3 671.1M1024.0 689.7L1012.9 700.9M1120.3 702.5L1129.0 708.0M1004.9 653.8L984.7 657.0M1147.3 668.7L1149.4 663.0M1092.6 703.5L1103.4 703.0M1148.1 673.8L1170.0 681.4M1107.8 688.4L1102.7 685.7M1023.6 689.2L1042.3 682.3M1056.8 664.0L1046.7 656.9M1138.1 674.5L1153.1 666.6M1113.2 681.8L1135.3 679.8M1016.8 649.5L1031.5 656.1M953.7 678.2L963.4 674.7M975.0 669.2L979.4 668.7M1087.0 645.1L1085.4 642.6M1146.7 697.9L1166.2 696.8M1109.7 688.1L1129.0 685.3M1102.6 676.7L1098.5 671.2M967.9 665.7L971.0 676.5M988.2 702.6L1002.6 708.4M1054.0 676.2L1058.4 682.6M1143.8 645.7L1163.3 653.0M1141.3 665.0L1131.8 673.4M1137.0 671.8L1133.1 666.4M984.1 655.9L974.6 648.4M1080.6 694.4L1082.1 689.3M1000.0 674.9L983.3 672.8M984.6 691.2L997.3 681.5M984.6 666.2L970.1 676.0M1052.1 646.4L1044.8 650.1M1148.8 667.3L1169.6 659.6M1003.7 691.2L1008.5 688.6M978.8 679.3L965.4 688.7M1161.6 687.9L1167.5 678.4M969.7 672.3L963.7 677.0M1154.0 675.2L1164.5 686.6M997.8 647.8L979.1 654.3M1072.1 691.1L1095.7 682.1M1079.7 677.4L1077.9 677.4M1069.7 695.5L1070.4 703.2M1026.6 703.9L1030.5 708.5M1059.9 690.3L1057.5 695.0M1129.4 645.8L1127.7 641.5M966.4 648.7L978.4 640.0M1093.8 648.8L1077.1 647.5M1107.4 690.9L1103.7 691.1M1087.7 648.2L1083.5 647.8M952.5 678.6L952.8 683.5M977.5 698.2L984.7 694.4M956.6 699.1L963.9 710.9M1162.6 661.5L1168.7 661.3M1120.6 672.4L1123.5 661.7M1151.6 648.5L1150.3 656.0M997.5 663.4L1005.2 653.5M1059.2 709.1L1047.7 712.0M1061.3 672.1L1061.0 683.7M978.8 682.5L971.5 673.8M1019.0 702.8L1017.1 701.5M1158.4 647.4L1162.4 657.3M1167.0 665.4L1157.4 671.0M1051.1 648.6L1033.1 657.4M1071.9 701.7L1087.0 697.0M1039.3 671.2L1038.3 665.4M1030.3 661.2L1022.9 665.0M1050.6 648.7L1055.8 658.9M1156.2 697.2L1170.0 689.6M1126.6 668.1L1116.9 665.7M1152.8 691.1L1162.3 686.7M1105.4 658.8L1102.9 666.2M1165.0 683.0L1167.7 681.2M975.8 685.9L981.7 675.2M1024.8 665.3L1044.7 672.4M1013.0 664.8L1005.5 655.7M1003.4 662.3L987.8 666.3M962.6 696.4L974.6 690.3M1027.4 685.1L1050.3 676.1M1117.2 663.6L1130.7 669.1M1029.5 656.4L1021.8 660.7M1087.4 658.4L1075.1 655.6M952.8 682.0L971.4 672.1M964.5 692.8L975.0 701.5M1054.7 707.7L1072.2 702.8M1028.4 648.2L1029.7 651.4M1071.9 681.2L1092.8 690.7M1013.9 647.2L994.7 658.1M1004.6 707.9L1011.1 696.0M1055.3 657.9L1046.8 654.4M992.8 645.7L970.4 656.6M1037.1 678.7L1017.2 678.2M1119.6 703.3L1106.9 712.0M1111.2 664.5L1092.5 658.4M997.1 653.6L1002.7 662.7M1056.8 695.2L1075.5 706.9M1063.8 685.9L1072.7 695.9M1091.6 693.6L1095.1 700.7M1130.6 652.6L1152.0 650.1M1090.7 697.5L1068.8 700.5M1094.9 681.8L1096.0 686.1M1044.8 679.1L1061.9 685.8M1088.4 707.2L1096.6 712.0M1080.4 682.7L1093.3 691.3M1061.0 648.0L1055.7 643.7M1132.9 693.3L1142.3 700.8M1066.0 676.1L1042.7 674.0M1119.1 656.3L1119.9 651.1M1000.8 661.3L988.1 666.7M1004.2 704.6L981.5 712.0M1130.0 703.6L1118.2 691.6M1118.1 679.6L1101.5 688.9M1016.2 655.6L1030.6 660.9M985.4 664.1L990.1 667.7M1132.6 656.7L1154.7 652.2M985.6 690.7L989.8 691.5M1070.0 689.9L1074.5 687.3M1025.7 654.7L1005.7 650.6M969.9 697.5L947.4 700.3M1061.4 700.2L1069.8 698.5M996.5 685.3L977.4 678.9M1141.7 700.3L1163.9 710.5M1070.6 651.0L1081.5 659.9M968.2 672.8L984.8 666.3M1012.9 663.1L1031.7 652.0M982.7 664.9L980.8 665.0M1156.4 647.7L1146.5 648.1M964.7 663.0L988.4 674.6M1073.8 707.6L1061.7 712.0M1114.5 706.5L1099.7 708.2M1157.4 694.7L1162.4 693.3M1143.0 701.8L1126.3 709.8M1018.5 698.0L1005.9 700.4M1160.1 656.2L1161.7 648.3M969.2 645.4L958.7 640.0M1120.6 651.8L1116.0 640.4M959.4 688.4L972.4 691.1M1079.4 645.1L1075.4 640.0M1109.6 690.1L1105.2 687.4M954.9 675.0L946.0 685.0M964.8 695.5L969.3 697.6M998.0 673.6L992.7 669.2M1101.6 659.0L1084.2 662.2M972.4 706.1L976.4 696.4M1147.3 680.7L1128.5 680.6M1130.8 663.3L1137.4 658.7M964.9 675.3L959.4 673.1M1141.8 703.9L1142.5 709.3M1129.7 668.8L1142.2 658.9M1000.8 663.5L1005.6 653.1M1160.3 681.9L1170.0 679.1M1142.0 688.3L1154.4 686.6M1034.4 693.9L1016.6 688.9M1038.9 676.5L1017.4 671.4M1006.0 698.2L1021.3 706.6M1135.1 705.5L1155.8 704.8M985.1 665.7L981.1 660.9M955.3 672.8L979.8 662.5M1034.2 656.3L1023.6 664.0M1069.8 692.5L1051.4 691.5M1066.8 655.9L1060.8 654.6M1122.2 708.5L1133.0 712.0M1064.0 665.0L1040.4 657.5M1135.8 696.8L1148.5 685.4M1078.0 651.4L1062.6 653.5M1074.2 699.9L1074.3 709.3M1140.9 693.3L1121.4 693.5M958.5 665.9L972.8 662.3M1147.2 694.4L1150.9 689.2M1023.3 701.5L1036.0 701.5M1026.9 675.9L1020.3 664.6M1032.8 707.9L1052.7 706.6M1102.4 691.0L1084.8 700.9M1080.1 645.7L1082.8 640.0M1091.0 710.0L1077.6 712.0M1128.1 682.7L1126.6 690.3M1066.6 676.1L1071.9 666.9M1136.1 705.3L1128.5 705.1M990.5 676.9L973.2 669.0M1030.0 706.9L1040.3 699.1M1070.8 688.3L1064.5 699.6M1156.8 672.5L1165.0 683.6M1148.4 701.9L1140.6 712.0M1100.9 663.1L1103.5 662.0M1086.4 699.7L1065.4 705.4M1158.2 653.1L1170.0 655.0M1086.2 675.3L1094.3 669.8M957.5 657.4L946.0 647.7M974.3 648.8L978.3 655.8M995.8 689.3L999.2 678.9M991.6 680.6L1003.5 691.0M961.8 673.8L975.1 672.9M1019.3 655.9L1006.1 659.9M973.9 656.2L958.7 662.0M965.3 701.8L970.4 712.0M1073.1 676.7L1076.2 684.5M988.1 649.1L981.7 642.8M1165.8 709.0L1167.6 710.7M977.5 656.1L966.1 654.2M1117.8 666.8L1113.4 656.0M1119.3 681.4L1130.2 673.9M1035.0 674.6L1042.7 664.2M1096.8 680.3L1087.0 676.1M1161.0 651.4L1170.0 656.7M1051.8 649.8L1042.4 660.8M1161.7 652.5L1170.0 664.2M978.4 707.9L983.8 699.4M1013.2 683.6L994.5 677.9M1131.4 658.9L1145.1 669.1M1149.9 649.1L1140.0 645.7M1048.3 646.4L1049.5 640.0M1141.7 687.7L1132.3 690.4M990.8 703.7L989.8 702.1M1061.2 661.7L1049.3 672.3M1127.6 682.2L1104.3 684.8M1141.4 646.8L1132.5 658.1M1152.7 664.8L1128.5 660.0M1020.6 656.3L1021.7 659.7M1119.6 694.1L1128.0 684.5M1029.1 673.6L1037.3 661.8M1074.3 685.0L1079.1 694.1M1120.1 647.3L1140.7 641.7M1009.2 674.9L1029.2 670.1M996.8 664.9L972.2 660.4M1022.8 700.9L1038.0 690.9M1063.7 696.6L1041.1 688.4M1078.7 667.8L1097.0 668.0M1145.2 679.3L1153.0 667.7M1075.1 668.9L1070.8 664.7M1116.9 666.3L1112.9 672.5M1061.2 668.6L1064.7 657.2M1075.4 645.6L1085.5 640.0M975.7 680.4L982.7 689.1M1124.7 653.0L1111.4 653.8M1149.4 672.6L1157.3 668.7M1106.5 646.4L1097.0 649.0M1113.2 674.1L1097.4 675.9M1165.3 678.3L1170.0 686.2M1113.6 699.6L1121.1 700.8M1143.0 693.2L1145.7 684.9M983.9 669.2L1008.5 677.9M1093.5 684.3L1084.3 675.2M967.3 687.0L962.4 676.0M1086.3 671.3L1100.9 678.9M950.0 645.9L949.7 640.0M1049.7 701.8L1040.7 693.3M1101.4 653.8L1125.1 661.5M1128.5 680.3L1117.8 687.5M977.3 686.1L958.1 674.6M1157.0 708.4L1170.0 705.5M1020.4 691.6L1011.0 700.0M1149.4 656.1L1126.2 651.5M1031.9 695.6L1030.9 692.8M1133.9 712.0L1133.3 761.0M1136.9 714.6L1137.1 758.2M1140.5 714.6L1140.1 759.5M1146.3 713.5L1145.7 759.4M1150.5 713.5L1150.1 760.2M1155.6 712.2L1155.1 758.1M1159.8 712.9L1159.6 759.2M1162.9 713.7L1163.5 759.5M1132.6 714.8L1166.6 714.3M1134.5 719.3L1164.1 719.5M1133.7 722.5L1167.6 722.4M1133.4 727.6L1165.4 727.5M1134.0 732.2L1164.5 731.8M1133.7 736.3L1167.9 736.1M1134.7 740.3L1166.7 740.2M1131.6 745.8L1165.6 745.2M1134.5 749.1L1167.5 748.6M1134.6 752.8L1167.6 753.2M1131.8 756.7L1167.1 757.0M1130.0 716.0L1147.1 738.0M1151.0 716.0L1134.0 738.0M1149.1 716.0L1161.7 738.0M1161.7 716.0L1149.0 738.0M1159.3 716.0L1164.6 738.0M1169.4 716.0L1164.1 738.0M1131.7 738.0L1146.9 760.0M1147.6 738.0L1132.3 760.0M1144.5 738.0L1164.1 760.0M1169.6 738.0L1150.0 760.0" stroke="#000" stroke-width="1" fill="none" shape-rendering="crispEdges"/><path d="M950 553.5H1167M950 556.5H1167M950 598H1167M950 601H1167M952 523V640M1164 523V640M1055 523V640M1060 523V640M990 545V640M1125 545V640M968 545V640M1148 545V640M1022 545V640M1095 545V640M946 640.5H1171M946 711H1171M947 640V712M1170 640V712M1025 622V700M1093 622V700M1131 712V758Q1131 761 1134 761H1165Q1168 761 1168 758V712" stroke="#000" stroke-width="2.4" fill="none" shape-rendering="crispEdges"/><path d="M1030 628H1088M1030 634H1088M1030 640H1088M1030 646H1088M1030 652H1088M1030 658H1088M1030 664H1088M1030 670H1088M1030 676H1088M1030 682H1088M1030 688H1088M1030 694H1088" stroke="#6a6a6a" stroke-width="1" fill="none" shape-rendering="crispEdges"/><path d="M990 714H1127" stroke="#a0a0a0" stroke-width="1.2"/><path d="M944 529H951M1167 529H1174" stroke="#000" stroke-width="1.5"/><rect x="927" y="534" width="17" height="46" rx="2" fill="#fff" stroke="#000" stroke-width="2"/><path d="M930 538l11 38M941 538l-11 38M934 538v38M938 538v38" stroke="#000" stroke-width=".8"/><path d="M936 530h12v54h-12" fill="none" stroke="#000" stroke-width="1.6"/><path d="M943 585h5v40h-5z" fill="#fff" stroke="#000" stroke-width="1"/><rect x="1173" y="534" width="17" height="46" rx="2" fill="#fff" stroke="#000" stroke-width="2"/><path d="M1176 538l11 38M1187 538l-11 38M1180 538v38M1184 538v38" stroke="#000" stroke-width=".8"/><path d="M1180 530h-12v54h12" fill="none" stroke="#000" stroke-width="1.6"/><path d="M1167 585h5v40h-5z" fill="#fff" stroke="#000" stroke-width="1"/><rect x="956.5" y="712.5" width="34" height="13" fill="#fff" stroke="#000"/><path d="M957 713l33 12M990 713l-33 12" stroke="#000" stroke-width=".8"/><g fill="#0020ff"><rect x="982" y="624" width="4" height="4"/><rect x="984" y="649" width="4" height="4"/><rect x="1131" y="624" width="4" height="4"/><rect x="1129" y="649" width="4" height="4"/><rect x="1057" y="566" width="3" height="3"/><rect x="1038" y="679" width="3" height="3"/><rect x="1076" y="679" width="3" height="3"/></g><path d="M955 553h25M1065 565h25M975 618h20M1125 618h20M1140 641h35M1135 650h40M1128 664h45M1150 678h25M1038 680h35M1150 705h25M1175 554h12" stroke="#e02020" stroke-width="1"/><path d="M1040 655v25M1078 655v25M1005 670v25M1140 665v25M972 645v20" stroke="#00a000" stroke-width="1.2"/></g></svg>
<svg style="left:770px;top:740px;" width="40" height="40" viewBox="0 0 40 40"><path d="M4.5 4v29" stroke="#005000" stroke-width="1.2"/><path d="M4 33.5h25" stroke="#600" stroke-width="1.2"/><text x="1" y="7" font-family="Liberation Mono" font-weight="bold" font-size="10" fill="#008000">y</text><text x="1" y="39" font-family="Liberation Mono" font-weight="bold" font-size="9" fill="#00f">z</text><text x="31" y="39" font-family="Liberation Mono" font-weight="bold" font-size="10" fill="#f00">x</text></svg>
<svg style="left:1170px;top:95px" width="410" height="85" viewBox="1170 95 410 85">
<defs><filter id="lsh" x="-10%" y="-20%" width="120%" height="150%"><feGaussianBlur in="SourceAlpha" stdDeviation="1.6"/><feOffset dx="-2" dy="3"/><feComponentTransfer><feFuncA type="linear" slope=".45"/></feComponentTransfer><feMerge><feMergeNode/><feMergeNode in="SourceGraphic"/></feMerge></filter></defs>
<g filter="url(#lsh)">
<g transform="translate(1210,168) skewX(-18)">
<text x="0" y="0" font-family="Liberation Serif" font-style="italic" font-weight="bold" font-size="84" textLength="340" lengthAdjust="spacingAndGlyphs" fill="#fff" stroke="#ee0000" stroke-width="3.2" paint-order="stroke" stroke-linejoin="round" letter-spacing="-2">GTAGamerHD</text>
</g>
<g transform="translate(1195,157) rotate(-25)"><ellipse cx="0" cy="0" rx="11" ry="8" fill="#fff" stroke="#ee0000" stroke-width="2"/><ellipse cx="1" cy="0" rx="6" ry="4" fill="none" stroke="#ee0000" stroke-width="1.6"/><path d="M-2 0a3 2 0 0 0 5 0" stroke="#ee0000" stroke-width="1.2" fill="none"/></g>
</g></svg></body></html>
